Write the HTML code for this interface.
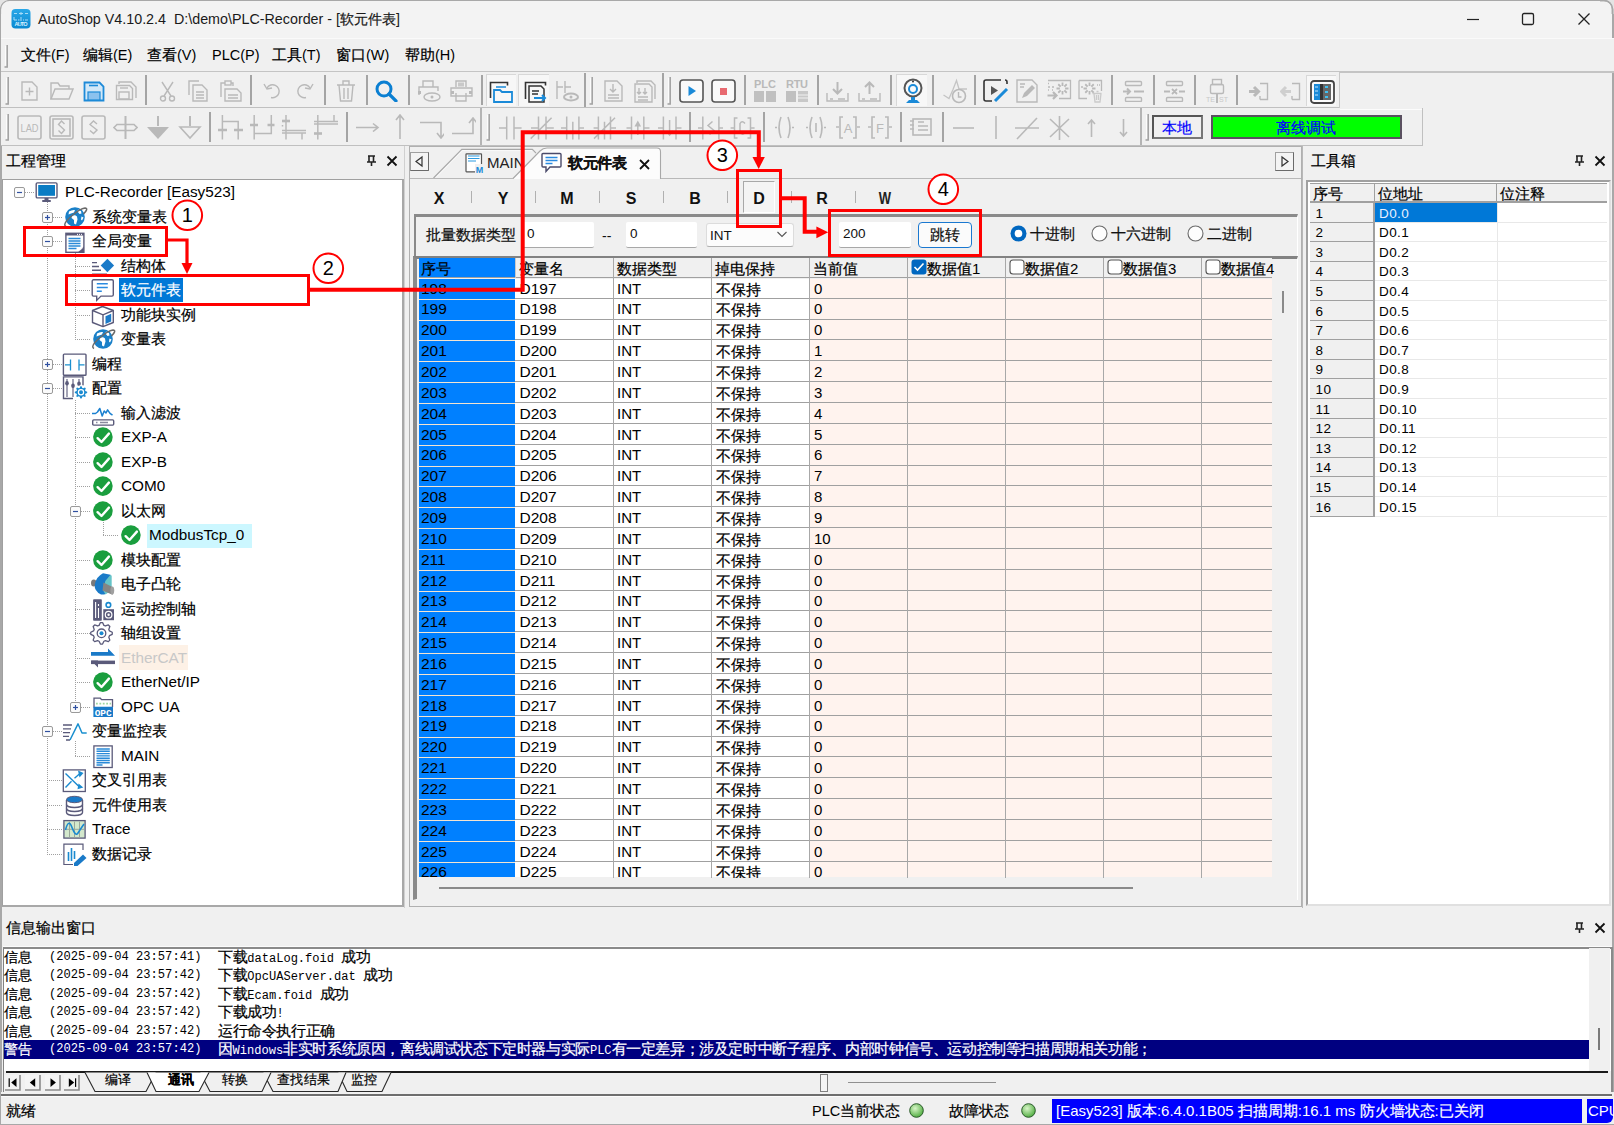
<!DOCTYPE html><html><head><meta charset='utf-8'><style>*{margin:0;padding:0}
body{width:1614px;height:1125px;overflow:hidden;background:#f0f0f0;font-family:"Liberation Sans",sans-serif;position:relative}
div,svg{position:absolute;box-sizing:border-box}
.t{white-space:nowrap;line-height:20px;height:20px;margin-top:-10px}
.c{-webkit-text-stroke:0.22px currentColor}
</style></head><body><div style="left:0px;top:0px;width:1614px;height:1125px;background:#f0f0f0"></div>
<div style="left:0px;top:0px;width:1614px;height:38px;background:#f3f3f3"></div>
<div style="left:0px;top:0px;width:1614px;height:1px;background:#a8a8a8"></div>
<div style="left:0px;top:0px;width:1px;height:1125px;background:#a8a8a8"></div>
<div style="left:1612px;top:8px;width:1.5px;height:1117px;background:#a8a8a8"></div>
<svg style="left:0px;top:0px;" width="14" height="14" viewBox="0 0 14 14"><path d="M0 0H14V0.5H9.5A9 9 0 0 0 0.5 9.5V14H0z" fill="#e4e4e4"/><path d="M14 0.5H9.5A9 9 0 0 0 0.5 9.5V14" stroke="#a8a8a8" stroke-width="1.2" fill="none"/></svg>
<svg style="left:1600px;top:0px;" width="14" height="14" viewBox="0 0 14 14"><path d="M0 0.5H4A8.5 8.5 0 0 1 12.5 9V14" stroke="#a8a8a8" stroke-width="1.5" fill="#f3f3f3"/><path d="M0 0H14V14H13.3V9A9 9 0 0 0 4 0z" fill="#e4e4e4"/><path d="M0 0.5H4A8.5 8.5 0 0 1 12.5 9V14" stroke="#a8a8a8" stroke-width="1.5" fill="none"/></svg>
<svg style="left:11px;top:8.5px;" width="20" height="20" viewBox="0 0 20 20"><defs><linearGradient id="ai" x1="0" y1="0" x2="0" y2="1"><stop offset="0" stop-color="#2aa8e8"/><stop offset="1" stop-color="#0a88d0"/></linearGradient></defs><rect x="0.5" y="0" width="19" height="19.5" rx="4" fill="url(#ai)"/><path d="M3 4.5h3M8 4.5h4M14 4.5h3M10 3v3M3 8v3h3M14 11h3M10 8v4M7 11h1.5M12 11h1" stroke="#a8dcf8" stroke-width="1" fill="none"/><text x="10" y="17.2" font-size="5.5" fill="#d8f0ff" text-anchor="middle" font-family="Liberation Sans" font-weight="bold" textLength="13">AUTO</text></svg>
<div class="t " style="left:38px;top:19px;font-size:14.3px;color:#1a1a1a">AutoShop V4.10.2.4&nbsp;&nbsp;D:\demo\PLC-Recorder - [<span class=c>软元件表</span>]</div>
<svg style="left:1466px;top:12px;" width="14" height="14" viewBox="0 0 14 14"><path d="M1 7.5h12" stroke="#222" stroke-width="1.2"/></svg>
<svg style="left:1521px;top:12px;" width="14" height="14" viewBox="0 0 14 14"><rect x="1.5" y="1.5" width="11" height="11" rx="1.5" stroke="#222" stroke-width="1.3" fill="none"/></svg>
<svg style="left:1577px;top:12px;" width="14" height="14" viewBox="0 0 14 14"><path d="M1.5 1.5L12.5 12.5M12.5 1.5L1.5 12.5" stroke="#222" stroke-width="1.3"/></svg>
<div style="left:1px;top:38px;width:1613px;height:34px;background:#f0f0f0"></div>
<div style="left:1px;top:38px;width:1613px;height:1px;background:#fafafa"></div>
<svg style="left:4px;top:44px;" width="5" height="24" viewBox="0 0 5 24"><path d="M0.5 23H3.2V1" stroke="#a0a0a0" stroke-width="1.5" fill="none"/><path d="M1.5 2V21.5" stroke="#fcfcfc" stroke-width="1"/></svg>
<div class="t " style="left:21px;top:55px;font-size:14.5px;color:#000"><span class=c>文件</span>(F)</div>
<div class="t " style="left:83px;top:55px;font-size:14.5px;color:#000"><span class=c>编辑</span>(E)</div>
<div class="t " style="left:147px;top:55px;font-size:14.5px;color:#000"><span class=c>查看</span>(V)</div>
<div class="t " style="left:212px;top:55px;font-size:14.5px;color:#000">PLC(P)</div>
<div class="t " style="left:272px;top:55px;font-size:14.5px;color:#000"><span class=c>工具</span>(T)</div>
<div class="t " style="left:336px;top:55px;font-size:14.5px;color:#000"><span class=c>窗口</span>(W)</div>
<div class="t " style="left:405px;top:55px;font-size:14.5px;color:#000"><span class=c>帮助</span>(H)</div>
<div style="left:1px;top:71px;width:1613px;height:2px;background:#c4c4c4"></div>
<div style="left:1px;top:72px;width:1339px;height:35px;background:#f0f0f0"></div>
<div style="left:1px;top:107px;width:1339px;height:1px;background:#c0c0c0"></div>
<svg style="left:5px;top:76px;" width="5" height="29" viewBox="0 0 5 29"><path d="M0.5 28H3.2V1" stroke="#a0a0a0" stroke-width="1.5" fill="none"/><path d="M1.5 2V26.5" stroke="#fcfcfc" stroke-width="1"/></svg>
<svg style="left:21px;top:81px;" width="18" height="20" viewBox="0 0 18 20"><path d="M1 1h10l5 5v13H1z" stroke="#b9b9b9" stroke-width="1.4" fill="none"/><path d="M8.5 6.5v8M4.5 10.5h8" stroke="#b9b9b9" stroke-width="1.4" fill="none"/></svg>
<svg style="left:50px;top:81px;" width="24" height="20" viewBox="0 0 24 20"><path d="M1 18V2h7l2 3h9v3" stroke="#b9b9b9" stroke-width="1.4" fill="none"/><path d="M1 18L5 8h18l-4 10z" stroke="#b9b9b9" stroke-width="1.4" fill="none" fill="#e6e6e6"/></svg>
<svg style="left:83px;top:81px;" width="22" height="21" viewBox="0 0 22 21"><path d="M1.5 1.5h15l4 4v14h-19z" stroke="#1d8ad8" stroke-width="1.8" fill="#d2e8f8"/><rect x="5" y="11" width="12" height="8" fill="#8cc2ee" stroke="#1d8ad8" stroke-width="1.2"/><path d="M6 4.5h9" stroke="#1d8ad8" stroke-width="1.6"/></svg>
<svg style="left:115px;top:81px;" width="22" height="20" viewBox="0 0 22 20"><path d="M4 3V1h12l5 5v11" stroke="#b9b9b9" stroke-width="1.4" fill="none"/><path d="M1.5 4.5h13l3 3v11h-16z" stroke="#b9b9b9" stroke-width="1.4" fill="none"/><rect x="4" y="11" width="10" height="7" stroke="#b9b9b9" stroke-width="1.4" fill="none"/><path d="M5 7h8" stroke="#b9b9b9" stroke-width="1.4" fill="none"/></svg>
<div style="left:145px;top:75px;width:1.5px;height:30px;background:#a4a4a4"></div>
<svg style="left:159px;top:81px;" width="17" height="21" viewBox="0 0 17 21"><path d="M3 1l9 14M14 1L5 15" stroke="#b9b9b9" stroke-width="1.4" fill="none"/><circle cx="4" cy="17.5" r="2.5" stroke="#b9b9b9" stroke-width="1.4" fill="none"/><circle cx="13" cy="17.5" r="2.5" stroke="#b9b9b9" stroke-width="1.4" fill="none"/></svg>
<svg style="left:188px;top:80px;" width="22" height="22" viewBox="0 0 22 22"><path d="M1 15V1h10" stroke="#b9b9b9" stroke-width="1.4" fill="none"/><path d="M5 5h9l5 5v11H5z" stroke="#b9b9b9" stroke-width="1.4" fill="none"/><path d="M8 12h8M8 15h8M8 18h8" stroke="#b9b9b9" stroke-width="1.4" fill="none"/></svg>
<svg style="left:220px;top:80px;" width="22" height="22" viewBox="0 0 22 22"><path d="M1 17V3h4M11 3h2v3" stroke="#b9b9b9" stroke-width="1.4" fill="none"/><rect x="5" y="1" width="6" height="4" stroke="#b9b9b9" stroke-width="1.4" fill="none"/><path d="M5 9h12l4 4v8H5z" stroke="#b9b9b9" stroke-width="1.4" fill="none"/><path d="M8 15h10M8 18h10" stroke="#b9b9b9" stroke-width="1.4" fill="none"/></svg>
<div style="left:250px;top:75px;width:1.5px;height:30px;background:#a4a4a4"></div>
<svg style="left:263px;top:82px;" width="19" height="17" viewBox="0 0 19 17"><path d="M4 6A6.5 6.5 0 1 1 8 15.5" stroke="#b9b9b9" stroke-width="1.4" fill="none"/><path d="M1 2l3 5 5-1" stroke="#b9b9b9" stroke-width="1.4" fill="none"/></svg>
<svg style="left:295px;top:82px;" width="19" height="17" viewBox="0 0 19 17"><path d="M15 6A6.5 6.5 0 1 0 11 15.5" stroke="#b9b9b9" stroke-width="1.4" fill="none"/><path d="M18 2l-3 5-5-1" stroke="#b9b9b9" stroke-width="1.4" fill="none"/></svg>
<div style="left:324px;top:75px;width:1.5px;height:30px;background:#a4a4a4"></div>
<svg style="left:336px;top:80px;" width="20" height="22" viewBox="0 0 20 22"><path d="M1 5h18M7 5V1h6v4M3 5l1.5 16h11L17 5M8 8v11M12 8v11" stroke="#b9b9b9" stroke-width="1.4" fill="none"/></svg>
<div style="left:366px;top:75px;width:1.5px;height:30px;background:#a4a4a4"></div>
<svg style="left:375px;top:80px;" width="23" height="22" viewBox="0 0 23 22"><circle cx="9" cy="9" r="7" stroke="#0a7fd2" stroke-width="3" fill="none"/><path d="M14 14l7 7" stroke="#0a7fd2" stroke-width="3.2" stroke-linecap="round"/></svg>
<div style="left:408px;top:75px;width:1.5px;height:30px;background:#a4a4a4"></div>
<svg style="left:417px;top:80px;" width="25" height="22" viewBox="0 0 25 22"><path d="M6 7V1h10v6M2 15V7h19v4" stroke="#b9b9b9" stroke-width="1.4" fill="none"/><rect x="1" y="11" width="3" height="3" fill="#b9b9b9"/><ellipse cx="15" cy="17" rx="8" ry="4" stroke="#b9b9b9" stroke-width="1.4" fill="none"/><circle cx="15" cy="17" r="1.5" fill="#b9b9b9"/></svg>
<svg style="left:450px;top:80px;" width="23" height="22" viewBox="0 0 23 22"><path d="M6 7V1h10v6" stroke="#b9b9b9" stroke-width="1.4" fill="none"/><rect x="8" y="2.5" width="6" height="4" fill="#c8c8c8"/><path d="M1 8h21v8H1z" stroke="#b9b9b9" stroke-width="1.4" fill="none"/><path d="M6 13v8h10v-8" stroke="#b9b9b9" stroke-width="1.4" fill="none"/><rect x="1" y="11" width="3" height="3" fill="#b9b9b9"/><rect x="19" y="11" width="3" height="3" fill="#b9b9b9"/></svg>
<div style="left:481px;top:75px;width:1.5px;height:30px;background:#a4a4a4"></div>
<div style="left:486px;top:74px;width:30px;height:32px;background:#f7f7f7;border-left:1px solid #d8d8d8;border-top:1px solid #d8d8d8"></div>
<svg style="left:489px;top:81px;" width="27" height="22" viewBox="0 0 27 22"><path d="M1.5 17V1.5h17v3" stroke="#333" stroke-width="1.6" fill="none"/><path d="M5 9h6l2 2h10v10H5z" stroke="#1a8ad8" stroke-width="1.8" fill="none"/><path d="M7 6h10" stroke="#1a8ad8" stroke-width="1.5"/></svg>
<div style="left:518px;top:74px;width:31px;height:32px;background:#f7f7f7;border-left:1px solid #d8d8d8;border-top:1px solid #d8d8d8"></div>
<svg style="left:524px;top:81px;" width="24" height="22" viewBox="0 0 24 22"><path d="M1.5 18V1.5h20v3" stroke="#333" stroke-width="1.6" fill="none"/><path d="M5 5h12l3 3v13H5z" stroke="#333" stroke-width="1.5" fill="#f7f7f7"/><path d="M8 10h7M8 13h6" stroke="#333" stroke-width="1.3"/><path d="M10 17h11M18 14l3 3-3 3" stroke="#1a8ad8" stroke-width="2" fill="none"/></svg>
<svg style="left:555px;top:80px;" width="24" height="22" viewBox="0 0 24 22"><path d="M2 1v18M2 7h6M10 1v12M10 7h6" stroke="#b9b9b9" stroke-width="1.4" fill="none"/><ellipse cx="16" cy="17" rx="7" ry="3.5" stroke="#b9b9b9" stroke-width="2" fill="none"/><circle cx="16" cy="17" r="1.5" fill="#b9b9b9"/></svg>
<div style="left:584px;top:73px;width:1.5px;height:34px;background:#a4a4a4"></div>
<svg style="left:589px;top:76px;" width="5" height="29" viewBox="0 0 5 29"><path d="M0.5 28H3.2V1" stroke="#a0a0a0" stroke-width="1.5" fill="none"/><path d="M1.5 2V26.5" stroke="#fcfcfc" stroke-width="1"/></svg>
<svg style="left:604px;top:80px;" width="20" height="22" viewBox="0 0 20 22"><path d="M1 1h12l5 5v15H1z" stroke="#b9b9b9" stroke-width="1.4" fill="none"/><path d="M9 4v8M6 9l3 3 3-3M4 15h11M4 18h11" stroke="#b9b9b9" stroke-width="1.4" fill="none"/></svg>
<svg style="left:634px;top:80px;" width="23" height="23" viewBox="0 0 23 23"><path d="M3 3V1h14l4 4v14" stroke="#b9b9b9" stroke-width="1.4" fill="none"/><path d="M1 4h14l3 3v15H1z" stroke="#b9b9b9" stroke-width="1.4" fill="none"/><path d="M5 8v6M3 12l2 2 2-2M11 8v6M9 12l2 2 2-2M4 17h10M4 20h10" stroke="#b9b9b9" stroke-width="1.4" fill="none"/></svg>
<div style="left:662px;top:73px;width:1.5px;height:34px;background:#a4a4a4"></div>
<svg style="left:667px;top:76px;" width="5" height="29" viewBox="0 0 5 29"><path d="M0.5 28H3.2V1" stroke="#a0a0a0" stroke-width="1.5" fill="none"/><path d="M1.5 2V26.5" stroke="#fcfcfc" stroke-width="1"/></svg>
<svg style="left:679px;top:79px;" width="25" height="24" viewBox="0 0 25 24"><rect x="1" y="1" width="23" height="22" rx="3" stroke="#555" stroke-width="1.6" fill="#fafafa"/><path d="M9.5 7v10l7.5-5z" fill="#1a8ad8"/></svg>
<svg style="left:711px;top:79px;" width="25" height="24" viewBox="0 0 25 24"><rect x="1" y="1" width="23" height="22" rx="3" stroke="#555" stroke-width="1.6" fill="#fafafa"/><rect x="9" y="9" width="7" height="7" fill="#e86a70"/></svg>
<div style="left:744px;top:75px;width:1.5px;height:30px;background:#a4a4a4"></div>
<svg style="left:753px;top:78px;" width="24" height="25" viewBox="0 0 24 25"><text x="12" y="10" font-size="11" font-family="Liberation Sans" fill="#b9b9b9" text-anchor="middle" font-weight="bold" textLength="22">PLC</text><rect x="1" y="13" width="10" height="11" fill="#c0c0c0"/><rect x="13" y="13" width="10" height="11" fill="#c0c0c0"/></svg>
<svg style="left:785px;top:78px;" width="24" height="25" viewBox="0 0 24 25"><text x="12" y="10" font-size="11" font-family="Liberation Sans" fill="#b9b9b9" text-anchor="middle" font-weight="bold" textLength="22">RTU</text><rect x="1" y="13" width="10" height="11" fill="#c0c0c0"/><rect x="13" y="13" width="10" height="11" fill="#c8c8c8"/><path d="M13 17h10M13 20h10" stroke="#f0f0f0" stroke-width="1"/></svg>
<div style="left:817px;top:75px;width:1.5px;height:30px;background:#a4a4a4"></div>
<svg style="left:826px;top:81px;" width="23" height="22" viewBox="0 0 23 22"><path d="M1 12v8h21v-8" stroke="#b9b9b9" stroke-width="1.4" fill="none"/><path d="M11.5 1v11M7 8l4.5 4.5L16 8" stroke="#b9b9b9" stroke-width="2" fill="none"/><path d="M4 18h3M12 18h7" stroke="#b9b9b9" stroke-width="1.4" fill="none"/></svg>
<svg style="left:858px;top:81px;" width="23" height="22" viewBox="0 0 23 22"><path d="M1 12v8h21v-8" stroke="#b9b9b9" stroke-width="1.4" fill="none"/><path d="M11.5 13V2M7 6l4.5-4.5L16 6" stroke="#b9b9b9" stroke-width="2" fill="none"/><path d="M4 18h3M12 18h7" stroke="#b9b9b9" stroke-width="1.4" fill="none"/></svg>
<div style="left:890px;top:75px;width:1.5px;height:30px;background:#a4a4a4"></div>
<div style="left:896px;top:74px;width:31px;height:32px;background:#f7f7f7;border-left:1px solid #d8d8d8;border-top:1px solid #d8d8d8"></div>
<svg style="left:902px;top:78px;" width="22" height="26" viewBox="0 0 22 26"><circle cx="11" cy="10" r="8.5" stroke="#555" stroke-width="2" fill="#fafafa"/><circle cx="11" cy="11" r="4" stroke="#1a8ad8" stroke-width="2" fill="none"/><circle cx="11" cy="3.5" r="1" fill="#333"/><path d="M9 19v3h4v-3M4 25h14l-3-3H7z" fill="#1a8ad8"/></svg>
<div style="left:932px;top:75px;width:1.5px;height:30px;background:#a4a4a4"></div>
<svg style="left:942px;top:78px;" width="26" height="26" viewBox="0 0 26 26"><path d="M1.5 17L7 20.5 11 11.5 14.5 2.5 17 11H25" stroke="#c4c4c4" stroke-width="1.3" fill="none"/><circle cx="17" cy="18" r="6.5" stroke="#b9b9b9" stroke-width="1.6" fill="#f0f0f0"/><path d="M16.5 14v5h3" stroke="#b9b9b9" stroke-width="1.4" fill="none"/></svg>
<div style="left:974px;top:75px;width:1.5px;height:30px;background:#a4a4a4"></div>
<svg style="left:983px;top:78px;" width="26" height="25" viewBox="0 0 26 25"><path d="M18 2h-15a2 2 0 0 0-2 2v17a2 2 0 0 0 2 2h6" stroke="#333" stroke-width="1.6" fill="none"/><path d="M24 6V4a2 2 0 0 0-2-2" stroke="#333" stroke-width="1.6" fill="none"/><path d="M8 8v9l7-4.5z" fill="#555"/><path d="M12 23l12-12" stroke="#1a8ad8" stroke-width="3"/></svg>
<svg style="left:1016px;top:79px;" width="22" height="24" viewBox="0 0 22 24"><path d="M1 1h15l5 5v17H1z" stroke="#b9b9b9" stroke-width="1.4" fill="none"/><path d="M4 5h5M4 8h4" stroke="#b9b9b9" stroke-width="1.4" fill="none"/><path d="M6 19l2-5 8-8 3 3-8 8z" fill="#b9b9b9"/></svg>
<svg style="left:1047px;top:79px;" width="25" height="22" viewBox="0 0 25 22"><path d="M1 1.5H23.5V19.5H12M1 4.5h1M1 8h2M5 8h2M1 11h1M5 11h1" stroke="#b9b9b9" stroke-width="1.3" fill="none"/><path d="M18.10 9.50L21.50 9.50M17.34 11.34L19.74 13.74M15.50 12.10L15.50 15.50M13.66 11.34L11.26 13.74M12.90 9.50L9.50 9.50M13.66 7.66L11.26 5.26M15.50 6.90L15.50 3.50M17.34 7.66L19.74 5.26" stroke="#b9b9b9" stroke-width="1.8"/><path d="M0.5 16.5H9M6 13l3.5 3.5L6 20" stroke="#b9b9b9" stroke-width="2.2" fill="none"/></svg>
<svg style="left:1078px;top:79px;" width="25" height="24" viewBox="0 0 25 24"><path d="M1 1.5H23.5V12M1 1.5V19.5H9M3 8h2M19 6h1M21 6h1" stroke="#b9b9b9" stroke-width="1.3" fill="none"/><path d="M14.10 9.50L17.50 9.50M13.34 11.34L15.74 13.74M11.50 12.10L11.50 15.50M9.66 11.34L7.26 13.74M8.90 9.50L5.50 9.50M9.66 7.66L7.26 5.26M11.50 6.90L11.50 3.50M13.34 7.66L15.74 5.26" stroke="#b9b9b9" stroke-width="1.8"/><path d="M14.5 14.5h9M16 14.5l1 8.5h5l1-8.5M18.5 12.5h2M18.5 16v5M20.5 16v5" stroke="#cacaca" stroke-width="1.3" fill="none"/></svg>
<div style="left:1111px;top:75px;width:1.5px;height:30px;background:#a4a4a4"></div>
<svg style="left:1122px;top:80px;" width="23" height="22" viewBox="0 0 23 22"><rect x="3.5" y="1.5" width="16" height="4" rx="1" stroke="#b9b9b9" stroke-width="1.4" fill="none"/><rect x="3.5" y="17.5" width="16" height="4" rx="1" stroke="#b9b9b9" stroke-width="1.4" fill="none"/><path d="M1 11.5h7M12 11.5h10M5 8.5l3 3-3 3" stroke="#b9b9b9" stroke-width="2" fill="none"/></svg>
<div style="left:1153px;top:75px;width:1.5px;height:30px;background:#a4a4a4"></div>
<svg style="left:1163px;top:80px;" width="23" height="22" viewBox="0 0 23 22"><rect x="3.5" y="1.5" width="16" height="4" rx="1" stroke="#b9b9b9" stroke-width="1.4" fill="none"/><rect x="3.5" y="17.5" width="16" height="4" rx="1" stroke="#b9b9b9" stroke-width="1.4" fill="none"/><path d="M1 11.5h6M16 11.5h6M9 9l5 5M14 9l-5 5" stroke="#b9b9b9" stroke-width="1.8" fill="none"/></svg>
<div style="left:1194px;top:75px;width:1.5px;height:30px;background:#a4a4a4"></div>
<svg style="left:1205px;top:78px;" width="24" height="25" viewBox="0 0 24 25"><rect x="7.5" y="1.5" width="9" height="5" stroke="#b9b9b9" stroke-width="1.4" fill="none"/><rect x="5.5" y="6.5" width="13" height="9" rx="1.5" stroke="#b9b9b9" stroke-width="1.4" fill="none"/><path d="M12 15v10" stroke="#b9b9b9" stroke-width="2"/><text x="1" y="24" font-size="7" font-family="Liberation Sans" fill="#c8c8c8">TE</text><text x="14" y="24" font-size="7" font-family="Liberation Sans" fill="#c8c8c8">ST</text></svg>
<div style="left:1236px;top:75px;width:1.5px;height:30px;background:#a4a4a4"></div>
<svg style="left:1248px;top:82px;" width="21" height="19" viewBox="0 0 21 19"><path d="M1 9.5h8M6 5l4.5 4.5L6 14" stroke="#b9b9b9" stroke-width="3" fill="none"/><path d="M12 1.5h7.5v16H12M12 14v3.5" stroke="#b9b9b9" stroke-width="1.4" fill="none"/></svg>
<svg style="left:1280px;top:82px;" width="21" height="19" viewBox="0 0 21 19"><path d="M11 9.5H3M6 5L1.5 9.5 6 14" stroke="#cfcfcf" stroke-width="3" fill="none"/><path d="M12 1.5h7.5v16H12M12 14v3.5" stroke="#b9b9b9" stroke-width="1.4" fill="none"/></svg>
<div style="left:1306px;top:75px;width:30px;height:31px;background:#f7f7f7;border-left:1px solid #d8d8d8;border-top:1px solid #d8d8d8"></div>
<svg style="left:1310px;top:80px;" width="25" height="24" viewBox="0 0 25 24"><rect x="1" y="1" width="23" height="22" rx="3" stroke="#444" stroke-width="1.8" fill="#fafafa"/><rect x="4" y="4" width="6" height="16" fill="#1a8ad8"/><rect x="10" y="4" width="3" height="16" fill="#333"/><rect x="13" y="4" width="8" height="16" fill="#666"/><path d="M15 7h3M15 12h3M15 17h3" stroke="#40c0f0" stroke-width="2"/><path d="M5 7h3M5 11h3M5 15h3" stroke="#bfe4ff" stroke-width="1"/></svg>
<div style="left:1339px;top:72px;width:1px;height:36px;background:#c8c8c8"></div>
<div style="left:1px;top:108px;width:1422px;height:37px;background:#f0f0f0"></div>
<div style="left:1340px;top:108.5px;width:82px;height:1px;background:#fcfcfc"></div>
<div style="left:1px;top:145px;width:1422px;height:1px;background:#c0c0c0"></div>
<svg style="left:5px;top:113px;" width="5" height="28" viewBox="0 0 5 28"><path d="M0.5 27H3.2V1" stroke="#a0a0a0" stroke-width="1.5" fill="none"/><path d="M1.5 2V25.5" stroke="#fcfcfc" stroke-width="1"/></svg>
<svg style="left:17px;top:115px;" width="25" height="25" viewBox="0 0 25 25"><rect x="1" y="1" width="23" height="23" rx="2" stroke="#b9b9b9" stroke-width="1.6" fill="none"/><text x="12.5" y="16.5" font-size="10.5" font-family="Liberation Sans" fill="#b9b9b9" text-anchor="middle" textLength="18" lengthAdjust="spacingAndGlyphs">LAD</text></svg>
<svg style="left:49px;top:115px;" width="25" height="25" viewBox="0 0 25 25"><rect x="1" y="1" width="23" height="23" rx="2" stroke="#b9b9b9" stroke-width="1.6" fill="none"/><rect x="4" y="4" width="17" height="17" stroke="#b9b9b9" stroke-width="1.6" fill="none"/><path d="M15.5 9L12.5 6 9.5 9.5 15.5 15 12.5 18.5 9.5 15.5" stroke="#b9b9b9" stroke-width="1.4" fill="none"/></svg>
<svg style="left:81px;top:115px;" width="25" height="25" viewBox="0 0 25 25"><rect x="1" y="1" width="23" height="23" rx="2" stroke="#b9b9b9" stroke-width="1.6" fill="none"/><path d="M16 9L12.5 6 9 9.5 16 15 12.5 18.5 9 15.5" stroke="#b9b9b9" stroke-width="1.4" fill="none"/></svg>
<svg style="left:113px;top:115px;" width="25" height="25" viewBox="0 0 25 25"><path d="M12.5 1v23" stroke="#b9b9b9" stroke-width="2"/><path d="M1 12.5l3-3h17l3 3-3 3H4z" stroke="#b9b9b9" stroke-width="1.6" fill="none"/></svg>
<svg style="left:146px;top:115px;" width="24" height="25" viewBox="0 0 24 25"><path d="M12 1v10" stroke="#b9b9b9" stroke-width="2"/><path d="M1 12h22l-11 12z" fill="#b9b9b9"/></svg>
<svg style="left:178px;top:115px;" width="24" height="25" viewBox="0 0 24 25"><path d="M12 1v10" stroke="#b9b9b9" stroke-width="2"/><path d="M2 12h20l-10 11z" stroke="#b9b9b9" stroke-width="1.6" fill="none"/></svg>
<div style="left:209px;top:112px;width:1.5px;height:30px;background:#a4a4a4"></div>
<svg style="left:210px;top:110px;" width="136" height="35" viewBox="0 0 136 35"><path d="M12.4 5v24.5M12.4 11.5H28.2V29.5" stroke="#b9b9b9" stroke-width="1.5" fill="none"/><path d="M8 20h9M24 20h9" stroke="#b9b9b9" stroke-width="2.6" fill="none"/><path d="M44.2 5v24.5M61.3 5V23.5H44.2" stroke="#b9b9b9" stroke-width="1.5" fill="none"/><path d="M40 15h8M57.5 15h7" stroke="#b9b9b9" stroke-width="2.6" fill="none"/><path d="M76 5v24.5M72 20.5H96M72 23H96M92 23v6.5" stroke="#b9b9b9" stroke-width="1.5" fill="none"/><path d="M72 11h8" stroke="#b9b9b9" stroke-width="2.6" fill="none"/><path d="M72.5 15v1.5" stroke="#b9b9b9" stroke-width="1.5" fill="none"/><path d="M107.8 5v24.5M124 5v6.5M104 11.5H128M104 14H128" stroke="#b9b9b9" stroke-width="1.5" fill="none"/><path d="M104 23.5h8" stroke="#b9b9b9" stroke-width="2.6" fill="none"/></svg>
<div style="left:346px;top:112px;width:1.5px;height:30px;background:#a4a4a4"></div>
<svg style="left:355px;top:122px;" width="25" height="10" viewBox="0 0 25 10"><path d="M1 5.5h22M18 1.5l5 4-5 4" stroke="#b9b9b9" stroke-width="1.6" fill="none"/></svg>
<svg style="left:395px;top:114px;" width="10" height="26" viewBox="0 0 10 26"><path d="M5 25V2M1 6l4-5 4 5" stroke="#b9b9b9" stroke-width="1.6" fill="none"/></svg>
<svg style="left:419px;top:120.5px;" width="25" height="18" viewBox="0 0 25 18"><path d="M1 1.5h21V16M18 12l4 5 4-5" stroke="#b9b9b9" stroke-width="1.6" fill="none"/></svg>
<svg style="left:451px;top:117.3px;" width="25" height="18" viewBox="0 0 25 18"><path d="M1 16.5h21V2M18 6l4-5 4 5" stroke="#b9b9b9" stroke-width="1.6" fill="none"/></svg>
<div style="left:480px;top:108px;width:1.5px;height:37px;background:#b4b4b4"></div>
<svg style="left:486px;top:113px;" width="5" height="28" viewBox="0 0 5 28"><path d="M0.5 27H3.2V1" stroke="#a0a0a0" stroke-width="1.5" fill="none"/><path d="M1.5 2V25.5" stroke="#fcfcfc" stroke-width="1"/></svg>
<svg style="left:480px;top:110px;" width="280" height="35" viewBox="0 0 280 35"><path d="M19 18H26.7M26.7 6.5V29.5M34 6.5V29.5M34 18H41.6" stroke="#b9b9b9" stroke-width="1.5" fill="none"/><path d="M51 18H58.5M58.5 6.5V29.5M66 6.5V29.5M66 18H73.8M50.7 28.6L71.6 7.8" stroke="#b9b9b9" stroke-width="1.5" fill="none"/><path d="M81 18H86.7M86.7 6.5V29.5M98.9 6.5V29.5M92.8 11.7V29.5M98.9 18H104" stroke="#b9b9b9" stroke-width="1.5" fill="none"/><path d="M113.6 18H118.4M118.4 6.5V29.5M130.5 6.5V29.5M124.5 11.7V29.5M130.5 18H136M114 28.6L135 7.8" stroke="#b9b9b9" stroke-width="1.5" fill="none"/><path d="M146.5 18H151.5M151.5 6.5V29.5M163.8 6.5V29.5M163.8 18H169.5M157.8 25V13" stroke="#b9b9b9" stroke-width="1.5" fill="none"/><path d="M154.5 16.5L157.8 10.5 161.1 16.5Z" fill="#b9b9b9"/><path d="M178 18H183.4M183.4 6.5V29.5M196 6.5V29.5M196 18H201.5M189.6 10V24M186.5 21L189.6 25 192.7 21" stroke="#b9b9b9" stroke-width="1.5" fill="none"/><path d="M218 18H222.8M222.8 6.5V29.5M238.9 6.5V29.5M238.9 18H243M232.5 11.5L228 15.5 234 20.5 229.5 24.5" stroke="#b9b9b9" stroke-width="1.5" fill="none"/><path d="M250.6 18H254M257.5 8H254.5V28H257.5M267.5 8H270.5V28H267.5M270.5 18H274.6M265 13.5Q262 10 260 13.5V22Q262 26 265 22.5" stroke="#b9b9b9" stroke-width="1.5" fill="none"/></svg>
<div style="left:689px;top:112px;width:1.5px;height:30px;background:#a4a4a4"></div>
<div style="left:763px;top:112px;width:1.5px;height:30px;background:#a4a4a4"></div>
<svg style="left:774px;top:116px;" width="21" height="23" viewBox="0 0 21 23"><path d="M1 11.5h2M18 11.5h2M7 1Q3 11.5 7 22M14 1Q18 11.5 14 22" stroke="#b9b9b9" stroke-width="1.6" fill="none"/></svg>
<svg style="left:805px;top:116px;" width="22" height="23" viewBox="0 0 22 23"><path d="M1 11.5h2M19 11.5h2M7 1Q3 11.5 7 22M15 1Q19 11.5 15 22M11 7v9" stroke="#b9b9b9" stroke-width="1.6" fill="none"/></svg>
<svg style="left:835px;top:115px;" width="26" height="25" viewBox="0 0 26 25"><path d="M1 12h3M22 12h3M8 2H5v21h3M18 2h3v21h-3" stroke="#b9b9b9" stroke-width="1.6" fill="none"/><text x="13" y="18" font-size="13" font-family="Liberation Sans" fill="#b9b9b9" text-anchor="middle">A</text></svg>
<svg style="left:867px;top:115px;" width="26" height="25" viewBox="0 0 26 25"><path d="M1 12h3M22 12h3M8 2H5v21h3M18 2h3v21h-3" stroke="#b9b9b9" stroke-width="1.6" fill="none"/><text x="13" y="18" font-size="13" font-family="Liberation Sans" fill="#b9b9b9" text-anchor="middle">F</text></svg>
<div style="left:900px;top:112px;width:1.5px;height:30px;background:#a4a4a4"></div>
<svg style="left:909px;top:117px;" width="23" height="20" viewBox="0 0 23 20"><rect x="4" y="2" width="18" height="16" stroke="#b9b9b9" stroke-width="1.6" fill="none"/><path d="M1 4h4M1 8h4M1 12h4M9 5h6M9 9h10M9 13h10" stroke="#b9b9b9" stroke-width="1.6" fill="none"/></svg>
<div style="left:942px;top:112px;width:1.5px;height:30px;background:#a4a4a4"></div>
<svg style="left:952px;top:126px;" width="23" height="4" viewBox="0 0 23 4"><path d="M1 2h21" stroke="#b9b9b9" stroke-width="1.6" fill="none"/></svg>
<svg style="left:994px;top:115px;" width="4" height="25" viewBox="0 0 4 25"><path d="M2 1v23" stroke="#b9b9b9" stroke-width="1.6" fill="none"/></svg>
<svg style="left:1014px;top:116px;" width="26" height="24" viewBox="0 0 26 24"><path d="M1 12h24M3 23L23 2" stroke="#b9b9b9" stroke-width="1.6" fill="none"/></svg>
<svg style="left:1048px;top:115px;" width="23" height="25" viewBox="0 0 23 25"><path d="M11.5 1v24M2 4l19 18M21 4L2 22" stroke="#b9b9b9" stroke-width="1.6" fill="none"/></svg>
<svg style="left:1087px;top:118px;" width="9" height="20" viewBox="0 0 9 20"><path d="M4.5 19V2M1 6l3.5-4 3.5 4" stroke="#b9b9b9" stroke-width="1.6" fill="none"/></svg>
<svg style="left:1119px;top:118px;" width="9" height="20" viewBox="0 0 9 20"><path d="M4.5 1v17M1 14l3.5 4 3.5-4" stroke="#b9b9b9" stroke-width="1.6" fill="none"/></svg>
<div style="left:1140px;top:108px;width:1.5px;height:37px;background:#b4b4b4"></div>
<svg style="left:1145px;top:113px;" width="5" height="28" viewBox="0 0 5 28"><path d="M0.5 27H3.2V1" stroke="#a0a0a0" stroke-width="1.5" fill="none"/><path d="M1.5 2V25.5" stroke="#fcfcfc" stroke-width="1"/></svg>
<div style="left:1152px;top:115px;width:51px;height:24px;border:2px solid #555;border-right-color:#777;border-bottom-color:#777;background:#f0f0f0"></div>
<div class="t " style="left:1177px;top:128px;font-size:15px;color:#0000ff;transform:translateX(-50%)"><span class=c>本地</span></div>
<div style="left:1211px;top:115px;width:191px;height:24px;border:2px solid #5a5060;background:#00ff00"></div>
<div class="t " style="left:1306px;top:128px;font-size:15px;color:#0000ff;transform:translateX(-50%)"><span class=c>离线调试</span></div>
<div style="left:1422px;top:108px;width:1px;height:38px;background:#c0c0c0"></div>
<div class="t " style="left:6px;top:161px;font-size:15px;color:#000"><span class=c>工程管理</span></div>
<svg style="left:366px;top:155px;" width="11" height="12" viewBox="0 0 11 12"><path d="M2 1h7M3 1v6M7.5 1v6M1 7h9M5.5 7v4" stroke="#222" stroke-width="1.6" fill="none"/></svg>
<svg style="left:386px;top:155px;" width="12" height="12" viewBox="0 0 12 12"><path d="M1.5 1.5l9 9M10.5 1.5l-9 9" stroke="#111" stroke-width="1.8"/></svg>
<div style="left:2px;top:179px;width:402px;height:728px;background:#fff;border:1px solid #a0a0a0;border-right:2px solid #a8a8a8;border-bottom:2px solid #a8a8a8"></div>
<div style="left:1px;top:146px;width:1px;height:949px;background:#a8a8a8"></div>
<div style="left:404px;top:146px;width:1px;height:762px;background:#d0d0d0"></div>
<div style="left:47px;top:200px;width:1px;height:654px;background-image:linear-gradient(180deg,#a0a0a0 50%,transparent 50%);background-size:1px 2px"></div>
<div style="left:75px;top:251px;width:1px;height:89px;background-image:linear-gradient(180deg,#a0a0a0 50%,transparent 50%);background-size:1px 2px"></div>
<div style="left:75px;top:400px;width:1px;height:307px;background-image:linear-gradient(180deg,#a0a0a0 50%,transparent 50%);background-size:1px 2px"></div>
<div style="left:75px;top:741px;width:1px;height:15px;background-image:linear-gradient(180deg,#a0a0a0 50%,transparent 50%);background-size:1px 2px"></div>
<div style="left:103px;top:520px;width:1px;height:16px;background-image:linear-gradient(180deg,#a0a0a0 50%,transparent 50%);background-size:1px 2px"></div>
<div style="left:25px;top:192px;width:10px;height:1px;background-image:linear-gradient(90deg,#a0a0a0 50%,transparent 50%);background-size:2px 1px"></div>
<svg style="left:13.5px;top:186.5px;" width="11" height="11" viewBox="0 0 11 11"><rect x="0.5" y="0.5" width="10" height="10" rx="1.5" fill="#fbfbfb" stroke="#9a9a9a"/><path d="M3 5.5h5" stroke="#3050a0" stroke-width="1.2"/></svg>
<svg style="left:34px;top:180px;" width="26" height="26" viewBox="0 0 26 26"><rect x="2.2" y="2.9" width="20.8" height="15" rx="1.2" fill="#fff" stroke="#5a5a7a" stroke-width="1.4"/><rect x="4.2" y="5" width="16.8" height="10.8" fill="#0a7cc4"/><rect x="10.5" y="17.9" width="4" height="2.2" fill="#5a5a7a"/><rect x="8" y="20" width="9" height="2" rx="1" fill="#5a5a7a"/></svg>
<div class="t " style="left:65px;top:192.1px;font-size:15.3px;color:#000">PLC-Recorder [Easy523]</div>
<div style="left:47px;top:217px;width:16px;height:1px;background-image:linear-gradient(90deg,#a0a0a0 50%,transparent 50%);background-size:2px 1px"></div>
<svg style="left:41.5px;top:211.5px;" width="11" height="11" viewBox="0 0 11 11"><rect x="0.5" y="0.5" width="10" height="10" rx="1.5" fill="#fbfbfb" stroke="#9a9a9a"/><path d="M3 5.5h5" stroke="#3050a0" stroke-width="1.2"/><path d="M5.5 3v5" stroke="#3050a0" stroke-width="1.2"/></svg>
<svg style="left:62px;top:205px;" width="26" height="26" viewBox="0 0 26 26"><circle cx="13" cy="12" r="9.8" fill="#1a80c8"/><path d="M7 6.5q3-2 6-1.5l-1 2.5-3 1-2.5 1zM10 11q3-1.5 5 .5l.5 3-1.5 5-2-1v-3.5l-2.5-2zM16 4.5l3 1.5.5 2.5-2 .5-2-2.5zM19.5 11.5l2 1-1.5 3-1-1z" fill="#fff"/><path d="M4 21.5q-4-2 5-10t14-8.5q4 .5-1.5 6" stroke="#6a6a6a" stroke-width="1.5" fill="none"/></svg>
<div class="t " style="left:92px;top:216.6px;font-size:15.3px;color:#000"><span class=c>系统变量表</span></div>
<div style="left:47px;top:241px;width:16px;height:1px;background-image:linear-gradient(90deg,#a0a0a0 50%,transparent 50%);background-size:2px 1px"></div>
<svg style="left:41.5px;top:235.5px;" width="11" height="11" viewBox="0 0 11 11"><rect x="0.5" y="0.5" width="10" height="10" rx="1.5" fill="#fbfbfb" stroke="#9a9a9a"/><path d="M3 5.5h5" stroke="#3050a0" stroke-width="1.2"/></svg>
<svg style="left:62px;top:229px;" width="26" height="26" viewBox="0 0 26 26"><rect x="3.9" y="4.3" width="18" height="19" fill="#fff" stroke="#5a5a7a" stroke-width="1.4"/><rect x="3.9" y="4.3" width="18" height="2.2" fill="#5a5a7a"/><path d="M15 5.4h1M17 5.4h1M19 5.4h1" stroke="#fff" stroke-width="1"/><path d="M6.5 9.5h12M6.5 12h12M6.5 14.5h12M6.5 17h12M6.5 19.5h8" stroke="#2a8ad8" stroke-width="1.3"/><path d="M16 23.3l5.9-5.9v5.9z" fill="#5a5a7a"/><path d="M17.8 21.5l2.5-2.5" stroke="#fff" stroke-width="0.9"/></svg>
<div class="t " style="left:92px;top:241.1px;font-size:15.3px;color:#000"><span class=c>全局变量</span></div>
<div style="left:75px;top:266px;width:16px;height:1px;background-image:linear-gradient(90deg,#a0a0a0 50%,transparent 50%);background-size:2px 1px"></div>
<svg style="left:90px;top:254px;" width="26" height="26" viewBox="0 0 26 26"><path d="M2 8.6h5M2 12.5h7M2 16.3h9" stroke="#5a5a7a" stroke-width="1.4"/><path d="M2 19.8h15" stroke="#8a8aa0" stroke-width="1"/><path d="M17.4 4.8l6.7 6.7-6.7 6.7-6.7-6.7z" fill="#1a7ac8"/></svg>
<div class="t " style="left:121px;top:265.6px;font-size:15.3px;color:#000"><span class=c>结构体</span></div>
<div style="left:75px;top:290px;width:16px;height:1px;background-image:linear-gradient(90deg,#a0a0a0 50%,transparent 50%);background-size:2px 1px"></div>
<svg style="left:90px;top:278px;" width="26" height="26" viewBox="0 0 26 26"><path d="M3.5 1.8h18.5a1.3 1.3 0 0 1 1.3 1.3V16.8a1.3 1.3 0 0 1-1.3 1.3H11l-4.3 4.3v-4.3H3.5a1.3 1.3 0 0 1-1.3-1.3V3.1a1.3 1.3 0 0 1 1.3-1.3z" fill="#fff" stroke="#5a5a7a" stroke-width="1.4"/><path d="M6.8 5.7h11M6.8 9.4h11M6.8 13.2h5" stroke="#2a8ae0" stroke-width="1.5"/></svg>
<div style="left:119px;top:278px;width:64px;height:24px;background:#0078d7"></div>
<div class="t " style="left:121px;top:290.1px;font-size:15.3px;color:#fff"><span class=c>软元件表</span></div>
<div style="left:75px;top:315px;width:16px;height:1px;background-image:linear-gradient(90deg,#a0a0a0 50%,transparent 50%);background-size:2px 1px"></div>
<svg style="left:90px;top:303px;" width="26" height="26" viewBox="0 0 26 26"><path d="M2.5 7.5L12.5 3.5 23.3 7.5V19.5L13 23.6 2.5 19.5Z" fill="#fff" stroke="#5a5a7a" stroke-width="1.4" stroke-linejoin="round"/><path d="M2.5 7.5L13 11.8 23.3 7.5M13 11.8V23.6" stroke="#5a5a7a" stroke-width="1.4" fill="none"/><path d="M15.5 13.2L21.2 10.8V18.5L15.5 21Z" fill="#1a7ac8"/></svg>
<div class="t " style="left:121px;top:314.6px;font-size:15.3px;color:#000"><span class=c>功能块实例</span></div>
<div style="left:75px;top:339px;width:16px;height:1px;background-image:linear-gradient(90deg,#a0a0a0 50%,transparent 50%);background-size:2px 1px"></div>
<svg style="left:90px;top:327px;" width="26" height="26" viewBox="0 0 26 26"><circle cx="13" cy="12" r="9.8" fill="#1a80c8"/><path d="M7 6.5q3-2 6-1.5l-1 2.5-3 1-2.5 1zM10 11q3-1.5 5 .5l.5 3-1.5 5-2-1v-3.5l-2.5-2zM16 4.5l3 1.5.5 2.5-2 .5-2-2.5zM19.5 11.5l2 1-1.5 3-1-1z" fill="#fff"/><path d="M4 21.5q-4-2 5-10t14-8.5q4 .5-1.5 6" stroke="#6a6a6a" stroke-width="1.5" fill="none"/></svg>
<div class="t " style="left:121px;top:339.1px;font-size:15.3px;color:#000"><span class=c>变量表</span></div>
<div style="left:47px;top:364px;width:16px;height:1px;background-image:linear-gradient(90deg,#a0a0a0 50%,transparent 50%);background-size:2px 1px"></div>
<svg style="left:41.5px;top:358.5px;" width="11" height="11" viewBox="0 0 11 11"><rect x="0.5" y="0.5" width="10" height="10" rx="1.5" fill="#fbfbfb" stroke="#9a9a9a"/><path d="M3 5.5h5" stroke="#3050a0" stroke-width="1.2"/><path d="M5.5 3v5" stroke="#3050a0" stroke-width="1.2"/></svg>
<svg style="left:62px;top:352px;" width="26" height="26" viewBox="0 0 26 26"><rect x="1.4" y="2.1" width="22.6" height="21.1" rx="0.8" fill="#fff" stroke="#5a5a7a" stroke-width="1.4"/><path d="M3 12.9h5.5M8.5 7.4v11M17 7.4v11M17 12.9h5.5" stroke="#1a90d0" stroke-width="1.3"/></svg>
<div class="t " style="left:92px;top:363.6px;font-size:15.3px;color:#000"><span class=c>编程</span></div>
<div style="left:47px;top:388px;width:16px;height:1px;background-image:linear-gradient(90deg,#a0a0a0 50%,transparent 50%);background-size:2px 1px"></div>
<svg style="left:41.5px;top:382.5px;" width="11" height="11" viewBox="0 0 11 11"><rect x="0.5" y="0.5" width="10" height="10" rx="1.5" fill="#fbfbfb" stroke="#9a9a9a"/><path d="M3 5.5h5" stroke="#3050a0" stroke-width="1.2"/></svg>
<svg style="left:62px;top:376px;" width="26" height="26" viewBox="0 0 26 26"><path d="M21 9.5V0.9H1.5V22.5H11" stroke="#5a5a7a" stroke-width="1.4" fill="none"/><path d="M5 3v18M11 3v18M17 3v7" stroke="#5a5a7a" stroke-width="1.1"/><ellipse cx="5" cy="7.3" rx="1.8" ry="2.3" fill="#5a5a7a"/><ellipse cx="11" cy="9.8" rx="1.8" ry="2.3" fill="#5a5a7a"/><ellipse cx="17" cy="7.8" rx="1.8" ry="2.3" fill="#5a5a7a"/><circle cx="19" cy="16.3" r="7" fill="#fff"/><path d="M25.17 15.69 L25.17 16.91 L23.40 17.64 L23.06 18.47 L23.79 20.23 L22.93 21.09 L21.17 20.36 L20.34 20.70 L19.61 22.47 L18.39 22.47 L17.66 20.70 L16.83 20.36 L15.07 21.09 L14.21 20.23 L14.94 18.47 L14.60 17.64 L12.83 16.91 L12.83 15.69 L14.60 14.96 L14.94 14.13 L14.21 12.37 L15.07 11.51 L16.83 12.24 L17.66 11.90 L18.39 10.13 L19.61 10.13 L20.34 11.90 L21.17 12.24 L22.93 11.51 L23.79 12.37 L23.06 14.13 L23.40 14.96Z" fill="#1a8ad0"/><circle cx="19" cy="16.3" r="2.6" fill="none" stroke="#fff" stroke-width="1.2"/></svg>
<div class="t " style="left:92px;top:388.1px;font-size:15.3px;color:#000"><span class=c>配置</span></div>
<div style="left:75px;top:413px;width:16px;height:1px;background-image:linear-gradient(90deg,#a0a0a0 50%,transparent 50%);background-size:2px 1px"></div>
<svg style="left:90px;top:401px;" width="26" height="26" viewBox="0 0 26 26"><path d="M2 12.5h3.5l2-1.5 2.3-3.5 2.4 7.5 2-5 1.8 2 1.6-3.2 2.4 3.5 2.5 1.8" stroke="#1a80d0" stroke-width="1.5" fill="none" stroke-linejoin="round"/><rect x="2.7" y="18.9" width="21" height="5.2" rx="1" fill="#fff" stroke="#5a5a7a" stroke-width="1.4"/><path d="M6 21.5h1.5M10 21.5h8" stroke="#8a8aa0" stroke-width="1.4"/></svg>
<div class="t " style="left:121px;top:412.6px;font-size:15.3px;color:#000"><span class=c>输入滤波</span></div>
<div style="left:75px;top:437px;width:16px;height:1px;background-image:linear-gradient(90deg,#a0a0a0 50%,transparent 50%);background-size:2px 1px"></div>
<svg style="left:90px;top:425px;" width="26" height="26" viewBox="0 0 26 26"><circle cx="12.9" cy="12.1" r="9.8" fill="#1a9e3e"/><path d="M7.6 13.2l3.9 3.8 7.4-8.4" stroke="#fff" stroke-width="2.4" fill="none" stroke-linecap="round" stroke-linejoin="round"/></svg>
<div class="t " style="left:121px;top:437.1px;font-size:15.3px;color:#000">EXP-A</div>
<div style="left:75px;top:462px;width:16px;height:1px;background-image:linear-gradient(90deg,#a0a0a0 50%,transparent 50%);background-size:2px 1px"></div>
<svg style="left:90px;top:450px;" width="26" height="26" viewBox="0 0 26 26"><circle cx="12.9" cy="12.1" r="9.8" fill="#1a9e3e"/><path d="M7.6 13.2l3.9 3.8 7.4-8.4" stroke="#fff" stroke-width="2.4" fill="none" stroke-linecap="round" stroke-linejoin="round"/></svg>
<div class="t " style="left:121px;top:461.6px;font-size:15.3px;color:#000">EXP-B</div>
<div style="left:75px;top:486px;width:16px;height:1px;background-image:linear-gradient(90deg,#a0a0a0 50%,transparent 50%);background-size:2px 1px"></div>
<svg style="left:90px;top:474px;" width="26" height="26" viewBox="0 0 26 26"><circle cx="12.9" cy="12.1" r="9.8" fill="#1a9e3e"/><path d="M7.6 13.2l3.9 3.8 7.4-8.4" stroke="#fff" stroke-width="2.4" fill="none" stroke-linecap="round" stroke-linejoin="round"/></svg>
<div class="t " style="left:121px;top:486.1px;font-size:15.3px;color:#000">COM0</div>
<div style="left:75px;top:511px;width:16px;height:1px;background-image:linear-gradient(90deg,#a0a0a0 50%,transparent 50%);background-size:2px 1px"></div>
<svg style="left:69.5px;top:505.5px;" width="11" height="11" viewBox="0 0 11 11"><rect x="0.5" y="0.5" width="10" height="10" rx="1.5" fill="#fbfbfb" stroke="#9a9a9a"/><path d="M3 5.5h5" stroke="#3050a0" stroke-width="1.2"/></svg>
<svg style="left:90px;top:499px;" width="26" height="26" viewBox="0 0 26 26"><circle cx="12.9" cy="12.1" r="9.8" fill="#1a9e3e"/><path d="M7.6 13.2l3.9 3.8 7.4-8.4" stroke="#fff" stroke-width="2.4" fill="none" stroke-linecap="round" stroke-linejoin="round"/></svg>
<div class="t " style="left:121px;top:510.6px;font-size:15.3px;color:#000"><span class=c>以太网</span></div>
<div style="left:103px;top:535px;width:16px;height:1px;background-image:linear-gradient(90deg,#a0a0a0 50%,transparent 50%);background-size:2px 1px"></div>
<svg style="left:118px;top:523px;" width="26" height="26" viewBox="0 0 26 26"><circle cx="12.9" cy="12.1" r="9.8" fill="#1a9e3e"/><path d="M7.6 13.2l3.9 3.8 7.4-8.4" stroke="#fff" stroke-width="2.4" fill="none" stroke-linecap="round" stroke-linejoin="round"/></svg>
<div style="left:147px;top:524px;width:105px;height:24px;background:#ccf7ff"></div>
<div class="t " style="left:149px;top:535.1px;font-size:15.3px;color:#000">ModbusTcp_0</div>
<div style="left:75px;top:560px;width:16px;height:1px;background-image:linear-gradient(90deg,#a0a0a0 50%,transparent 50%);background-size:2px 1px"></div>
<svg style="left:90px;top:548px;" width="26" height="26" viewBox="0 0 26 26"><circle cx="12.9" cy="12.1" r="9.8" fill="#1a9e3e"/><path d="M7.6 13.2l3.9 3.8 7.4-8.4" stroke="#fff" stroke-width="2.4" fill="none" stroke-linecap="round" stroke-linejoin="round"/></svg>
<div class="t " style="left:121px;top:559.6px;font-size:15.3px;color:#000"><span class=c>模块配置</span></div>
<div style="left:75px;top:584px;width:16px;height:1px;background-image:linear-gradient(90deg,#a0a0a0 50%,transparent 50%);background-size:2px 1px"></div>
<svg style="left:90px;top:572px;" width="26" height="26" viewBox="0 0 26 26"><ellipse cx="3.8" cy="11" rx="2.8" ry="3.5" fill="#7a7a7a"/><path d="M13 1.2L20.5 2.8 21 15 14.5 22.5H11Q4 19 4.8 12.5 5.8 5 13 1.2Z" fill="#1a7ac8"/><path d="M20.5 2.8L21.7 3.8V18L15.5 22.5 13.2 18.5 15.3 9Z" fill="#66c4c8"/><path d="M13.5 10.5L21.5 14.5 24 18.5 22.5 22.8 12.5 18.5Z" fill="#858585"/><ellipse cx="22.3" cy="18.6" rx="1.9" ry="4" fill="#a0a0a0"/></svg>
<div class="t " style="left:121px;top:584.1px;font-size:15.3px;color:#000"><span class=c>电子凸轮</span></div>
<div style="left:75px;top:609px;width:16px;height:1px;background-image:linear-gradient(90deg,#a0a0a0 50%,transparent 50%);background-size:2px 1px"></div>
<svg style="left:90px;top:597px;" width="26" height="26" viewBox="0 0 26 26"><rect x="3.1" y="2.2" width="8.7" height="21.5" rx="0.8" fill="#5a5a7a"/><path d="M5.6 5v16M8.5 7v2M8.5 11v10" stroke="#fff" stroke-width="1.1"/><circle cx="18.4" cy="7.9" r="2.3" fill="none" stroke="#1a8ad0" stroke-width="1.6"/><rect x="13.3" y="12.2" width="10.7" height="11" fill="#5a5a7a"/><circle cx="18.6" cy="17.7" r="3.3" fill="none" stroke="#fff" stroke-width="1.2"/><circle cx="18.6" cy="17.7" r="1.2" fill="#fff"/></svg>
<div class="t " style="left:121px;top:608.6px;font-size:15.3px;color:#000"><span class=c>运动控制轴</span></div>
<div style="left:75px;top:633px;width:16px;height:1px;background-image:linear-gradient(90deg,#a0a0a0 50%,transparent 50%);background-size:2px 1px"></div>
<svg style="left:90px;top:621px;" width="26" height="26" viewBox="0 0 26 26"><path d="M22.25 11.24 L22.25 13.36 L19.44 14.71 L18.82 16.21 L19.85 19.15 L18.35 20.65 L15.41 19.62 L13.91 20.24 L12.56 23.05 L10.44 23.05 L9.09 20.24 L7.59 19.62 L4.65 20.65 L3.15 19.15 L4.18 16.21 L3.56 14.71 L0.75 13.36 L0.75 11.24 L3.56 9.89 L4.18 8.39 L3.15 5.45 L4.65 3.95 L7.59 4.98 L9.09 4.36 L10.44 1.55 L12.56 1.55 L13.91 4.36 L15.41 4.98 L18.35 3.95 L19.85 5.45 L18.82 8.39 L19.44 9.89Z" fill="none" stroke="#5a5a7a" stroke-width="1.3" stroke-linejoin="round"/><circle cx="11.5" cy="12.3" r="4.3" fill="none" stroke="#5a5a7a" stroke-width="1.3"/><circle cx="11.5" cy="12.3" r="2" fill="#1a8ad0"/></svg>
<div class="t " style="left:121px;top:633.1px;font-size:15.3px;color:#000"><span class=c>轴组设置</span></div>
<div style="left:75px;top:658px;width:16px;height:1px;background-image:linear-gradient(90deg,#a0a0a0 50%,transparent 50%);background-size:2px 1px"></div>
<svg style="left:90px;top:646px;" width="26" height="26" viewBox="0 0 26 26"><path d="M1 6.1H18V2.6L25 9.7H1Z" fill="#1a7ac8"/><path d="M25 14.6H8V21.6L1 14.6Z" fill="#5a5a7a"/><rect x="1" y="14.6" width="24" height="3.5" fill="#5a5a7a"/></svg>
<div style="left:119px;top:645px;width:69px;height:25px;background:#fdf1e6"></div>
<div class="t " style="left:121px;top:657.6px;font-size:15.3px;color:#c8c8c8">EtherCAT</div>
<div style="left:75px;top:682px;width:16px;height:1px;background-image:linear-gradient(90deg,#a0a0a0 50%,transparent 50%);background-size:2px 1px"></div>
<svg style="left:90px;top:670px;" width="26" height="26" viewBox="0 0 26 26"><circle cx="12.9" cy="12.1" r="9.8" fill="#1a9e3e"/><path d="M7.6 13.2l3.9 3.8 7.4-8.4" stroke="#fff" stroke-width="2.4" fill="none" stroke-linecap="round" stroke-linejoin="round"/></svg>
<div class="t " style="left:121px;top:682.1px;font-size:15.3px;color:#000">EtherNet/IP</div>
<div style="left:75px;top:707px;width:16px;height:1px;background-image:linear-gradient(90deg,#a0a0a0 50%,transparent 50%);background-size:2px 1px"></div>
<svg style="left:69.5px;top:701.5px;" width="11" height="11" viewBox="0 0 11 11"><rect x="0.5" y="0.5" width="10" height="10" rx="1.5" fill="#fbfbfb" stroke="#9a9a9a"/><path d="M3 5.5h5" stroke="#3050a0" stroke-width="1.2"/><path d="M5.5 3v5" stroke="#3050a0" stroke-width="1.2"/></svg>
<svg style="left:90px;top:695px;" width="26" height="26" viewBox="0 0 26 26"><path d="M4 12V3.2h6.3l1.3 1.5H22.5V12" fill="#fff" stroke="#5a5a7a" stroke-width="1.3"/><path d="M6 8.6h15" stroke="#a0d8a0" stroke-width="1.8" stroke-dasharray="1.8 1.6"/><rect x="3.4" y="11.7" width="19.6" height="10.3" rx="0.5" fill="#1a7ac8"/><text x="13.2" y="20.6" font-size="9.5" font-weight="bold" font-family="Liberation Mono" fill="#fff" text-anchor="middle" textLength="17">OPC</text></svg>
<div class="t " style="left:121px;top:706.6px;font-size:15.3px;color:#000">OPC UA</div>
<div style="left:47px;top:731px;width:16px;height:1px;background-image:linear-gradient(90deg,#a0a0a0 50%,transparent 50%);background-size:2px 1px"></div>
<svg style="left:41.5px;top:725.5px;" width="11" height="11" viewBox="0 0 11 11"><rect x="0.5" y="0.5" width="10" height="10" rx="1.5" fill="#fbfbfb" stroke="#9a9a9a"/><path d="M3 5.5h5" stroke="#3050a0" stroke-width="1.2"/></svg>
<svg style="left:62px;top:719px;" width="26" height="26" viewBox="0 0 26 26"><path d="M1 6h9M1 9.8h8M1 13.6h7M1 17.4h6M4 21h4" stroke="#5a5a7a" stroke-width="1.3"/><path d="M8 21L16 4.8 20 14H24.7" stroke="#1a90d0" stroke-width="1.5" fill="none" stroke-linejoin="round"/></svg>
<div class="t " style="left:92px;top:731.1px;font-size:15.3px;color:#000"><span class=c>变量监控表</span></div>
<div style="left:75px;top:756px;width:16px;height:1px;background-image:linear-gradient(90deg,#a0a0a0 50%,transparent 50%);background-size:2px 1px"></div>
<svg style="left:90px;top:744px;" width="26" height="26" viewBox="0 0 26 26"><rect x="3.9" y="1.9" width="18.3" height="21.6" fill="#fff" stroke="#5a5a7a" stroke-width="1.3"/><path d="M6.5 5h13.3M6.5 7.3h13.3M6.5 9.6h13.3M6.5 11.9h13.3M6.5 14.2h13.3M6.5 16.5h13.3M6.5 18.8h13.3M6.5 21h6" stroke="#2a8ad8" stroke-width="1.4"/></svg>
<div class="t " style="left:121px;top:755.6px;font-size:15.3px;color:#000">MAIN</div>
<div style="left:47px;top:780px;width:16px;height:1px;background-image:linear-gradient(90deg,#a0a0a0 50%,transparent 50%);background-size:2px 1px"></div>
<svg style="left:62px;top:768px;" width="26" height="26" viewBox="0 0 26 26"><rect x="1.3" y="1.9" width="22" height="21.6" fill="#fff" stroke="#5a5a7a" stroke-width="1.3"/><path d="M3.5 5.5L18 19.5M3.5 19.5L9.5 13.3M12.5 10.3L18.5 5" stroke="#1a8ad0" stroke-width="1.4" fill="none"/><path d="M16 2.5l5.5 2.5-4 4.5zM16.5 15.5l4.8 4-5.8 1.8z" fill="#1a8ad0"/></svg>
<div class="t " style="left:92px;top:780.1px;font-size:15.3px;color:#000"><span class=c>交叉引用表</span></div>
<div style="left:47px;top:805px;width:16px;height:1px;background-image:linear-gradient(90deg,#a0a0a0 50%,transparent 50%);background-size:2px 1px"></div>
<svg style="left:62px;top:793px;" width="26" height="26" viewBox="0 0 26 26"><path d="M4.5 7V19.5A8 3 0 0 0 20.5 19.5V7" fill="#fff" stroke="#5a5a7a" stroke-width="1.4"/><path d="M4.5 11.5A8 3 0 0 0 20.5 11.5M4.5 15.5A8 3 0 0 0 20.5 15.5" stroke="#5a5a7a" stroke-width="1.4" fill="none"/><ellipse cx="12.5" cy="6.5" rx="8" ry="3.2" fill="#1a7ac8" stroke="#5a5a7a" stroke-width="1"/></svg>
<div class="t " style="left:92px;top:804.6px;font-size:15.3px;color:#000"><span class=c>元件使用表</span></div>
<div style="left:47px;top:829px;width:16px;height:1px;background-image:linear-gradient(90deg,#a0a0a0 50%,transparent 50%);background-size:2px 1px"></div>
<svg style="left:62px;top:817px;" width="26" height="26" viewBox="0 0 26 26"><rect x="1.9" y="3.6" width="21.2" height="17.5" fill="#d3e8cc" stroke="#5a5a7a" stroke-width="1.3"/><path d="M7.5 4.5v16M12.5 4.5v16M17.5 4.5v16M3 12.3h19" stroke="#9aa89a" stroke-width="1"/><path d="M3.5 13Q6.5 1 10 10.5T16 16 22 7" stroke="#1a8ad0" stroke-width="1.6" fill="none"/></svg>
<div class="t " style="left:92px;top:829.1px;font-size:15.3px;color:#000">Trace</div>
<div style="left:47px;top:854px;width:16px;height:1px;background-image:linear-gradient(90deg,#a0a0a0 50%,transparent 50%);background-size:2px 1px"></div>
<svg style="left:62px;top:842px;" width="26" height="26" viewBox="0 0 26 26"><path d="M21 8V2.2H1.9V22.5H11" stroke="#5a5a7a" stroke-width="1.2" fill="none"/><path d="M6.5 10v9M9.5 6v13M12.5 9v8" stroke="#1a8ad0" stroke-width="1.6"/><path d="M12 21l9-8.5 3.5 3.5-9 8H12z" fill="#1a7ac8"/></svg>
<div class="t " style="left:92px;top:853.6px;font-size:15.3px;color:#000"><span class=c>数据记录</span></div>
<div style="left:409px;top:146px;width:893px;height:761px;border:1px solid #b0b0b0;background:#f0f0f0"></div>
<svg style="left:410px;top:152px;" width="19" height="19" viewBox="0 0 19 19"><rect x="0.5" y="0.5" width="18" height="18" fill="#f4f4f4" stroke="#a0a0a0"/><path d="M12 5v9l-6-4.5z" fill="none" stroke="#333" stroke-width="1.2"/><path d="M18.5 0.5v18h-18" stroke="#6a6a6a" fill="none"/></svg>
<svg style="left:1275px;top:152px;" width="19" height="19" viewBox="0 0 19 19"><rect x="0.5" y="0.5" width="18" height="18" fill="#f4f4f4" stroke="#a0a0a0"/><path d="M7 5v9l6-4.5z" fill="none" stroke="#333" stroke-width="1.2"/><path d="M18.5 0.5v18h-18" stroke="#6a6a6a" fill="none"/></svg>
<svg style="left:432px;top:147px;" width="110" height="32" viewBox="0 0 110 32"><path d="M1.5 31L29.8 2.4H100.4L104 6.2" fill="#f0f0f0" stroke="#a8a8a8" stroke-width="1.1"/><path d="M4 30.5L30.5 3.6H100" stroke="#fafafa" stroke-width="1" fill="none"/></svg>
<svg style="left:465px;top:153px;" width="19" height="20" viewBox="0 0 19 20"><rect x="1" y="0.8" width="15.5" height="18" rx="0.5" fill="#fff" stroke="#555" stroke-width="1.2"/><path d="M3 3h11.5M3 5.5h11.5M3 8h8" stroke="#2a9ae0" stroke-width="1.2"/><rect x="10" y="11" width="9" height="9" fill="#f0f0f0"/><text x="14.6" y="19.5" font-size="9" fill="#1a8ad8" font-family="Liberation Sans" font-weight="bold" text-anchor="middle">M</text></svg>
<div class="t " style="left:487px;top:163px;font-size:15px;color:#222">MAIN</div>
<svg style="left:512px;top:147px;" width="150" height="33" viewBox="0 0 150 33"><path d="M0.5 32L28 4q3-3 7-3H145q3.5 0 3.5 3.5V32" fill="#fcfcfc" stroke="#a8a8a8" stroke-width="1.1"/></svg>
<svg style="left:541px;top:152px;" width="22" height="22" viewBox="0 0 22 22"><path d="M2 1.5h17a1 1 0 0 1 1 1V14a1 1 0 0 1-1 1H9l-4 4.5V15H2a1 1 0 0 1-1-1V2.5a1 1 0 0 1 1-1z" fill="#fff" stroke="#4a4a6a" stroke-width="1.4"/><path d="M4.5 5.5h12M4.5 8.5h12M4.5 11.5h7" stroke="#2a8ae0" stroke-width="1.4"/></svg>
<div class="t " style="left:568px;top:163px;font-size:15px;color:#111;font-weight:bold;letter-spacing:-0.3px"><span class=c>软元件表</span></div>
<svg style="left:639px;top:159px;" width="11" height="11" viewBox="0 0 11 11"><path d="M1 1l9 9M10 1l-9 9" stroke="#111" stroke-width="1.8"/></svg>
<div style="left:410px;top:178px;width:103px;height:1px;background:#b8b8b8"></div>
<div style="left:661px;top:178px;width:640px;height:1px;background:#b8b8b8"></div>
<div style="left:411px;top:179px;width:889px;height:37px;background:#f0f0f0"></div>
<div style="left:743px;top:181px;width:32px;height:32px;border-top:1px solid #a8a8a8;border-left:1px solid #a8a8a8;border-right:1px solid #fff;border-bottom:1px solid #fff;background:#f4f4f4"></div>
<div class="t " style="left:439px;top:199px;font-size:16px;color:#111;font-weight:bold;transform:translateX(-50%)">X</div>
<div class="t " style="left:503px;top:199px;font-size:16px;color:#111;font-weight:bold;transform:translateX(-50%)">Y</div>
<div class="t " style="left:567px;top:199px;font-size:16px;color:#111;font-weight:bold;transform:translateX(-50%)">M</div>
<div class="t " style="left:631px;top:199px;font-size:16px;color:#111;font-weight:bold;transform:translateX(-50%)">S</div>
<div class="t " style="left:695px;top:199px;font-size:16px;color:#111;font-weight:bold;transform:translateX(-50%)">B</div>
<div class="t " style="left:759px;top:199px;font-size:16px;color:#111;font-weight:bold;transform:translateX(-50%)">D</div>
<div class="t " style="left:822px;top:199px;font-size:16px;color:#111;font-weight:bold;transform:translateX(-50%)">R</div>
<div class="t " style="left:885px;top:199px;font-size:13px;color:#222;font-weight:bold;transform:translateX(-50%) scaleY(1.3)">W</div>
<div style="left:471px;top:191px;width:1px;height:12px;background:#b0b0b0"></div>
<div style="left:535px;top:191px;width:1px;height:12px;background:#b0b0b0"></div>
<div style="left:599px;top:191px;width:1px;height:12px;background:#b0b0b0"></div>
<div style="left:663px;top:191px;width:1px;height:12px;background:#b0b0b0"></div>
<div style="left:727px;top:191px;width:1px;height:12px;background:#b0b0b0"></div>
<div style="left:791px;top:191px;width:1px;height:12px;background:#b0b0b0"></div>
<div style="left:855px;top:191px;width:1px;height:12px;background:#b0b0b0"></div>
<div style="left:414px;top:214px;width:884px;height:43px;border-top:3px solid #8a8a8a;border-left:2px solid #8a8a8a;border-right:1px solid #fff;background:#f0f0f0"></div>
<div class="t " style="left:426px;top:235px;font-size:14.7px;color:#111"><span class=c>批量数据类型</span></div>
<div style="left:522px;top:222px;width:72px;height:26px;background:#fff;border-bottom:1px solid #a8a8a8;border-radius:2px"></div>
<div class="t " style="left:527px;top:234px;font-size:13.5px;color:#111">0</div>
<div class="t " style="left:602px;top:236px;font-size:14px;color:#111">--</div>
<div style="left:626px;top:222px;width:71px;height:26px;background:#fff;border-bottom:1px solid #a8a8a8;border-radius:2px"></div>
<div class="t " style="left:630px;top:234px;font-size:13.5px;color:#111">0</div>
<div style="left:706px;top:223px;width:88px;height:24px;background:#fcfcfc;border:1px solid #dcdcdc;border-bottom-color:#b0b0b0;border-radius:3px"></div>
<div class="t " style="left:710px;top:236px;font-size:13.5px;color:#111">INT</div>
<svg style="left:777px;top:231px;" width="10" height="7" viewBox="0 0 10 7"><path d="M0.5 1l4.5 4.5L9.5 1" stroke="#555" stroke-width="1.1" fill="none"/></svg>
<div style="left:839px;top:222px;width:72px;height:26px;background:#fff;border-bottom:1px solid #a8a8a8;border-radius:2px"></div>
<div class="t " style="left:843px;top:234px;font-size:13.5px;color:#111">200</div>
<div style="left:918px;top:222px;width:54px;height:26px;background:#fbfbfb;border:1.5px solid #1a78d0;border-radius:4px"></div>
<div class="t " style="left:945px;top:235px;font-size:14.5px;color:#111;transform:translateX(-50%)"><span class=c>跳转</span></div>
<svg style="left:1010px;top:225px;" width="17" height="17" viewBox="0 0 17 17"><circle cx="8.5" cy="8.5" r="8" fill="#0067c0"/><circle cx="8.5" cy="8.5" r="3.8" fill="#fff"/></svg>
<div class="t " style="left:1030px;top:234px;font-size:15px;color:#111"><span class=c>十进制</span></div>
<svg style="left:1091px;top:225px;" width="17" height="17" viewBox="0 0 17 17"><circle cx="8.5" cy="8.5" r="7.5" fill="#fdfdfd" stroke="#6a6a6a" stroke-width="1.1"/></svg>
<div class="t " style="left:1111px;top:234px;font-size:15px;color:#111"><span class=c>十六进制</span></div>
<svg style="left:1187px;top:225px;" width="17" height="17" viewBox="0 0 17 17"><circle cx="8.5" cy="8.5" r="7.5" fill="#fdfdfd" stroke="#6a6a6a" stroke-width="1.1"/></svg>
<div class="t " style="left:1207px;top:234px;font-size:15px;color:#111"><span class=c>二进制</span></div>
<div style="left:413px;top:256px;width:885px;height:644px;border-top:3px solid #828282;border-left:4px solid #8a8a8a;border-bottom:1px solid #fff;border-right:1px solid #fff;background:#f0f0f0"></div>
<div style="left:419px;top:258px;width:853px;height:21px;background:#f0f0f0"></div>
<div style="left:419px;top:258px;width:96px;height:20px;background:#0080ff"></div>
<div class="t " style="left:421px;top:269px;font-size:15px;color:#000"><span class=c>序号</span></div>
<div class="t " style="left:519px;top:269px;font-size:15px;color:#000"><span class=c>变量名</span></div>
<div class="t " style="left:617px;top:269px;font-size:15px;color:#000"><span class=c>数据类型</span></div>
<div class="t " style="left:715px;top:269px;font-size:15px;color:#000"><span class=c>掉电保持</span></div>
<div class="t " style="left:813px;top:269px;font-size:15px;color:#000"><span class=c>当前值</span></div>
<svg style="left:911px;top:259px;" width="16" height="16" viewBox="0 0 16 16"><rect x="0.5" y="0.5" width="15" height="15" rx="3" fill="#0067c0"/><path d="M3.5 8l3 3 6-6.5" stroke="#fff" stroke-width="1.6" fill="none"/></svg>
<div class="t " style="left:927px;top:269px;font-size:15px;color:#000"><span class=c>数据值</span>1</div>
<svg style="left:1009px;top:259px;" width="16" height="16" viewBox="0 0 16 16"><rect x="1" y="1" width="14" height="14" rx="3" fill="#fff" stroke="#555" stroke-width="1.1"/></svg>
<div class="t " style="left:1025px;top:269px;font-size:15px;color:#000"><span class=c>数据值</span>2</div>
<svg style="left:1107px;top:259px;" width="16" height="16" viewBox="0 0 16 16"><rect x="1" y="1" width="14" height="14" rx="3" fill="#fff" stroke="#555" stroke-width="1.1"/></svg>
<div class="t " style="left:1123px;top:269px;font-size:15px;color:#000"><span class=c>数据值</span>3</div>
<svg style="left:1205px;top:259px;" width="16" height="16" viewBox="0 0 16 16"><rect x="1" y="1" width="14" height="14" rx="3" fill="#fff" stroke="#555" stroke-width="1.1"/></svg>
<div class="t " style="left:1221px;top:269px;font-size:15px;color:#000"><span class=c>数据值</span>4</div>
<div style="left:809px;top:278.9px;width:463px;height:598.6px;background:#fff3ee"></div>
<div style="left:515px;top:278.9px;width:294px;height:598.6px;background:#fff"></div>
<div style="left:419px;top:278.9px;width:96px;height:598.6px;background:#0080ff"></div>
<div style="left:419px;top:277px;width:853px;height:1px;background:#a0a0a0"></div>
<div style="left:515px;top:298px;width:757px;height:1px;background:#a0a0a0"></div>
<div style="left:419px;top:298.5px;width:96px;height:1.5px;background:#f4e4d0"></div>
<div style="left:515px;top:319px;width:757px;height:1px;background:#a0a0a0"></div>
<div style="left:419px;top:319.5px;width:96px;height:1.5px;background:#f4e4d0"></div>
<div style="left:515px;top:339px;width:757px;height:1px;background:#a0a0a0"></div>
<div style="left:419px;top:339.5px;width:96px;height:1.5px;background:#f4e4d0"></div>
<div style="left:515px;top:360px;width:757px;height:1px;background:#a0a0a0"></div>
<div style="left:419px;top:360.5px;width:96px;height:1.5px;background:#f4e4d0"></div>
<div style="left:515px;top:381px;width:757px;height:1px;background:#a0a0a0"></div>
<div style="left:419px;top:381.5px;width:96px;height:1.5px;background:#f4e4d0"></div>
<div style="left:515px;top:402px;width:757px;height:1px;background:#a0a0a0"></div>
<div style="left:419px;top:402.5px;width:96px;height:1.5px;background:#f4e4d0"></div>
<div style="left:515px;top:423px;width:757px;height:1px;background:#a0a0a0"></div>
<div style="left:419px;top:423.5px;width:96px;height:1.5px;background:#f4e4d0"></div>
<div style="left:515px;top:444px;width:757px;height:1px;background:#a0a0a0"></div>
<div style="left:419px;top:444.5px;width:96px;height:1.5px;background:#f4e4d0"></div>
<div style="left:515px;top:465px;width:757px;height:1px;background:#a0a0a0"></div>
<div style="left:419px;top:465.5px;width:96px;height:1.5px;background:#f4e4d0"></div>
<div style="left:515px;top:485px;width:757px;height:1px;background:#a0a0a0"></div>
<div style="left:419px;top:485.5px;width:96px;height:1.5px;background:#f4e4d0"></div>
<div style="left:515px;top:506px;width:757px;height:1px;background:#a0a0a0"></div>
<div style="left:419px;top:506.5px;width:96px;height:1.5px;background:#f4e4d0"></div>
<div style="left:515px;top:527px;width:757px;height:1px;background:#a0a0a0"></div>
<div style="left:419px;top:527.5px;width:96px;height:1.5px;background:#f4e4d0"></div>
<div style="left:515px;top:548px;width:757px;height:1px;background:#a0a0a0"></div>
<div style="left:419px;top:548.5px;width:96px;height:1.5px;background:#f4e4d0"></div>
<div style="left:515px;top:569px;width:757px;height:1px;background:#a0a0a0"></div>
<div style="left:419px;top:569.5px;width:96px;height:1.5px;background:#f4e4d0"></div>
<div style="left:515px;top:590px;width:757px;height:1px;background:#a0a0a0"></div>
<div style="left:419px;top:590.5px;width:96px;height:1.5px;background:#f4e4d0"></div>
<div style="left:515px;top:610px;width:757px;height:1px;background:#a0a0a0"></div>
<div style="left:419px;top:610.5px;width:96px;height:1.5px;background:#f4e4d0"></div>
<div style="left:515px;top:631px;width:757px;height:1px;background:#a0a0a0"></div>
<div style="left:419px;top:631.5px;width:96px;height:1.5px;background:#f4e4d0"></div>
<div style="left:515px;top:652px;width:757px;height:1px;background:#a0a0a0"></div>
<div style="left:419px;top:652.5px;width:96px;height:1.5px;background:#f4e4d0"></div>
<div style="left:515px;top:673px;width:757px;height:1px;background:#a0a0a0"></div>
<div style="left:419px;top:673.5px;width:96px;height:1.5px;background:#f4e4d0"></div>
<div style="left:515px;top:694px;width:757px;height:1px;background:#a0a0a0"></div>
<div style="left:419px;top:694.5px;width:96px;height:1.5px;background:#f4e4d0"></div>
<div style="left:515px;top:715px;width:757px;height:1px;background:#a0a0a0"></div>
<div style="left:419px;top:715.5px;width:96px;height:1.5px;background:#f4e4d0"></div>
<div style="left:515px;top:736px;width:757px;height:1px;background:#a0a0a0"></div>
<div style="left:419px;top:736.5px;width:96px;height:1.5px;background:#f4e4d0"></div>
<div style="left:515px;top:756px;width:757px;height:1px;background:#a0a0a0"></div>
<div style="left:419px;top:756.5px;width:96px;height:1.5px;background:#f4e4d0"></div>
<div style="left:515px;top:777px;width:757px;height:1px;background:#a0a0a0"></div>
<div style="left:419px;top:777.5px;width:96px;height:1.5px;background:#f4e4d0"></div>
<div style="left:515px;top:798px;width:757px;height:1px;background:#a0a0a0"></div>
<div style="left:419px;top:798.5px;width:96px;height:1.5px;background:#f4e4d0"></div>
<div style="left:515px;top:819px;width:757px;height:1px;background:#a0a0a0"></div>
<div style="left:419px;top:819.5px;width:96px;height:1.5px;background:#f4e4d0"></div>
<div style="left:515px;top:840px;width:757px;height:1px;background:#a0a0a0"></div>
<div style="left:419px;top:840.5px;width:96px;height:1.5px;background:#f4e4d0"></div>
<div style="left:515px;top:861px;width:757px;height:1px;background:#a0a0a0"></div>
<div style="left:419px;top:861.5px;width:96px;height:1.5px;background:#f4e4d0"></div>
<div style="left:613px;top:258px;width:1px;height:620px;background:#a8a8a8"></div>
<div style="left:711px;top:258px;width:1px;height:620px;background:#a8a8a8"></div>
<div style="left:809px;top:258px;width:1px;height:620px;background:#a8a8a8"></div>
<div style="left:907px;top:258px;width:1px;height:620px;background:#a8a8a8"></div>
<div style="left:1005px;top:258px;width:1px;height:620px;background:#a8a8a8"></div>
<div style="left:1103px;top:258px;width:1px;height:620px;background:#a8a8a8"></div>
<div style="left:1201px;top:258px;width:1px;height:620px;background:#a8a8a8"></div>
<div style="left:515px;top:258px;width:1px;height:20px;background:#c8c8c8"></div>
<div class="t " style="left:421px;top:288.59999999999997px;font-size:15.5px;color:#000">198</div>
<div class="t " style="left:519.5px;top:288.59999999999997px;font-size:15.5px;color:#000">D197</div>
<div class="t " style="left:617px;top:288.59999999999997px;font-size:15px;color:#000">INT</div>
<div class="t " style="left:716px;top:289.59999999999997px;font-size:15px;color:#000"><span class=c>不保持</span></div>
<div class="t " style="left:814px;top:288.59999999999997px;font-size:15px;color:#000">0</div>
<div class="t " style="left:421px;top:309.45px;font-size:15.5px;color:#000">199</div>
<div class="t " style="left:519.5px;top:309.45px;font-size:15.5px;color:#000">D198</div>
<div class="t " style="left:617px;top:309.45px;font-size:15px;color:#000">INT</div>
<div class="t " style="left:716px;top:310.45px;font-size:15px;color:#000"><span class=c>不保持</span></div>
<div class="t " style="left:814px;top:309.45px;font-size:15px;color:#000">0</div>
<div class="t " style="left:421px;top:330.29999999999995px;font-size:15.5px;color:#000">200</div>
<div class="t " style="left:519.5px;top:330.29999999999995px;font-size:15.5px;color:#000">D199</div>
<div class="t " style="left:617px;top:330.29999999999995px;font-size:15px;color:#000">INT</div>
<div class="t " style="left:716px;top:331.29999999999995px;font-size:15px;color:#000"><span class=c>不保持</span></div>
<div class="t " style="left:814px;top:330.29999999999995px;font-size:15px;color:#000">0</div>
<div class="t " style="left:421px;top:351.15px;font-size:15.5px;color:#000">201</div>
<div class="t " style="left:519.5px;top:351.15px;font-size:15.5px;color:#000">D200</div>
<div class="t " style="left:617px;top:351.15px;font-size:15px;color:#000">INT</div>
<div class="t " style="left:716px;top:352.15px;font-size:15px;color:#000"><span class=c>不保持</span></div>
<div class="t " style="left:814px;top:351.15px;font-size:15px;color:#000">1</div>
<div class="t " style="left:421px;top:371.99999999999994px;font-size:15.5px;color:#000">202</div>
<div class="t " style="left:519.5px;top:371.99999999999994px;font-size:15.5px;color:#000">D201</div>
<div class="t " style="left:617px;top:371.99999999999994px;font-size:15px;color:#000">INT</div>
<div class="t " style="left:716px;top:372.99999999999994px;font-size:15px;color:#000"><span class=c>不保持</span></div>
<div class="t " style="left:814px;top:371.99999999999994px;font-size:15px;color:#000">2</div>
<div class="t " style="left:421px;top:392.84999999999997px;font-size:15.5px;color:#000">203</div>
<div class="t " style="left:519.5px;top:392.84999999999997px;font-size:15.5px;color:#000">D202</div>
<div class="t " style="left:617px;top:392.84999999999997px;font-size:15px;color:#000">INT</div>
<div class="t " style="left:716px;top:393.84999999999997px;font-size:15px;color:#000"><span class=c>不保持</span></div>
<div class="t " style="left:814px;top:392.84999999999997px;font-size:15px;color:#000">3</div>
<div class="t " style="left:421px;top:413.7px;font-size:15.5px;color:#000">204</div>
<div class="t " style="left:519.5px;top:413.7px;font-size:15.5px;color:#000">D203</div>
<div class="t " style="left:617px;top:413.7px;font-size:15px;color:#000">INT</div>
<div class="t " style="left:716px;top:414.7px;font-size:15px;color:#000"><span class=c>不保持</span></div>
<div class="t " style="left:814px;top:413.7px;font-size:15px;color:#000">4</div>
<div class="t " style="left:421px;top:434.55px;font-size:15.5px;color:#000">205</div>
<div class="t " style="left:519.5px;top:434.55px;font-size:15.5px;color:#000">D204</div>
<div class="t " style="left:617px;top:434.55px;font-size:15px;color:#000">INT</div>
<div class="t " style="left:716px;top:435.55px;font-size:15px;color:#000"><span class=c>不保持</span></div>
<div class="t " style="left:814px;top:434.55px;font-size:15px;color:#000">5</div>
<div class="t " style="left:421px;top:455.4px;font-size:15.5px;color:#000">206</div>
<div class="t " style="left:519.5px;top:455.4px;font-size:15.5px;color:#000">D205</div>
<div class="t " style="left:617px;top:455.4px;font-size:15px;color:#000">INT</div>
<div class="t " style="left:716px;top:456.4px;font-size:15px;color:#000"><span class=c>不保持</span></div>
<div class="t " style="left:814px;top:455.4px;font-size:15px;color:#000">6</div>
<div class="t " style="left:421px;top:476.24999999999994px;font-size:15.5px;color:#000">207</div>
<div class="t " style="left:519.5px;top:476.24999999999994px;font-size:15.5px;color:#000">D206</div>
<div class="t " style="left:617px;top:476.24999999999994px;font-size:15px;color:#000">INT</div>
<div class="t " style="left:716px;top:477.24999999999994px;font-size:15px;color:#000"><span class=c>不保持</span></div>
<div class="t " style="left:814px;top:476.24999999999994px;font-size:15px;color:#000">7</div>
<div class="t " style="left:421px;top:497.09999999999997px;font-size:15.5px;color:#000">208</div>
<div class="t " style="left:519.5px;top:497.09999999999997px;font-size:15.5px;color:#000">D207</div>
<div class="t " style="left:617px;top:497.09999999999997px;font-size:15px;color:#000">INT</div>
<div class="t " style="left:716px;top:498.09999999999997px;font-size:15px;color:#000"><span class=c>不保持</span></div>
<div class="t " style="left:814px;top:497.09999999999997px;font-size:15px;color:#000">8</div>
<div class="t " style="left:421px;top:517.95px;font-size:15.5px;color:#000">209</div>
<div class="t " style="left:519.5px;top:517.95px;font-size:15.5px;color:#000">D208</div>
<div class="t " style="left:617px;top:517.95px;font-size:15px;color:#000">INT</div>
<div class="t " style="left:716px;top:518.95px;font-size:15px;color:#000"><span class=c>不保持</span></div>
<div class="t " style="left:814px;top:517.95px;font-size:15px;color:#000">9</div>
<div class="t " style="left:421px;top:538.8000000000001px;font-size:15.5px;color:#000">210</div>
<div class="t " style="left:519.5px;top:538.8000000000001px;font-size:15.5px;color:#000">D209</div>
<div class="t " style="left:617px;top:538.8000000000001px;font-size:15px;color:#000">INT</div>
<div class="t " style="left:716px;top:539.8000000000001px;font-size:15px;color:#000"><span class=c>不保持</span></div>
<div class="t " style="left:814px;top:538.8000000000001px;font-size:15px;color:#000">10</div>
<div class="t " style="left:421px;top:559.6500000000001px;font-size:15.5px;color:#000">211</div>
<div class="t " style="left:519.5px;top:559.6500000000001px;font-size:15.5px;color:#000">D210</div>
<div class="t " style="left:617px;top:559.6500000000001px;font-size:15px;color:#000">INT</div>
<div class="t " style="left:716px;top:560.6500000000001px;font-size:15px;color:#000"><span class=c>不保持</span></div>
<div class="t " style="left:814px;top:559.6500000000001px;font-size:15px;color:#000">0</div>
<div class="t " style="left:421px;top:580.5px;font-size:15.5px;color:#000">212</div>
<div class="t " style="left:519.5px;top:580.5px;font-size:15.5px;color:#000">D211</div>
<div class="t " style="left:617px;top:580.5px;font-size:15px;color:#000">INT</div>
<div class="t " style="left:716px;top:581.5px;font-size:15px;color:#000"><span class=c>不保持</span></div>
<div class="t " style="left:814px;top:580.5px;font-size:15px;color:#000">0</div>
<div class="t " style="left:421px;top:601.35px;font-size:15.5px;color:#000">213</div>
<div class="t " style="left:519.5px;top:601.35px;font-size:15.5px;color:#000">D212</div>
<div class="t " style="left:617px;top:601.35px;font-size:15px;color:#000">INT</div>
<div class="t " style="left:716px;top:602.35px;font-size:15px;color:#000"><span class=c>不保持</span></div>
<div class="t " style="left:814px;top:601.35px;font-size:15px;color:#000">0</div>
<div class="t " style="left:421px;top:622.2px;font-size:15.5px;color:#000">214</div>
<div class="t " style="left:519.5px;top:622.2px;font-size:15.5px;color:#000">D213</div>
<div class="t " style="left:617px;top:622.2px;font-size:15px;color:#000">INT</div>
<div class="t " style="left:716px;top:623.2px;font-size:15px;color:#000"><span class=c>不保持</span></div>
<div class="t " style="left:814px;top:622.2px;font-size:15px;color:#000">0</div>
<div class="t " style="left:421px;top:643.0500000000001px;font-size:15.5px;color:#000">215</div>
<div class="t " style="left:519.5px;top:643.0500000000001px;font-size:15.5px;color:#000">D214</div>
<div class="t " style="left:617px;top:643.0500000000001px;font-size:15px;color:#000">INT</div>
<div class="t " style="left:716px;top:644.0500000000001px;font-size:15px;color:#000"><span class=c>不保持</span></div>
<div class="t " style="left:814px;top:643.0500000000001px;font-size:15px;color:#000">0</div>
<div class="t " style="left:421px;top:663.9000000000001px;font-size:15.5px;color:#000">216</div>
<div class="t " style="left:519.5px;top:663.9000000000001px;font-size:15.5px;color:#000">D215</div>
<div class="t " style="left:617px;top:663.9000000000001px;font-size:15px;color:#000">INT</div>
<div class="t " style="left:716px;top:664.9000000000001px;font-size:15px;color:#000"><span class=c>不保持</span></div>
<div class="t " style="left:814px;top:663.9000000000001px;font-size:15px;color:#000">0</div>
<div class="t " style="left:421px;top:684.75px;font-size:15.5px;color:#000">217</div>
<div class="t " style="left:519.5px;top:684.75px;font-size:15.5px;color:#000">D216</div>
<div class="t " style="left:617px;top:684.75px;font-size:15px;color:#000">INT</div>
<div class="t " style="left:716px;top:685.75px;font-size:15px;color:#000"><span class=c>不保持</span></div>
<div class="t " style="left:814px;top:684.75px;font-size:15px;color:#000">0</div>
<div class="t " style="left:421px;top:705.6px;font-size:15.5px;color:#000">218</div>
<div class="t " style="left:519.5px;top:705.6px;font-size:15.5px;color:#000">D217</div>
<div class="t " style="left:617px;top:705.6px;font-size:15px;color:#000">INT</div>
<div class="t " style="left:716px;top:706.6px;font-size:15px;color:#000"><span class=c>不保持</span></div>
<div class="t " style="left:814px;top:705.6px;font-size:15px;color:#000">0</div>
<div class="t " style="left:421px;top:726.45px;font-size:15.5px;color:#000">219</div>
<div class="t " style="left:519.5px;top:726.45px;font-size:15.5px;color:#000">D218</div>
<div class="t " style="left:617px;top:726.45px;font-size:15px;color:#000">INT</div>
<div class="t " style="left:716px;top:727.45px;font-size:15px;color:#000"><span class=c>不保持</span></div>
<div class="t " style="left:814px;top:726.45px;font-size:15px;color:#000">0</div>
<div class="t " style="left:421px;top:747.3000000000001px;font-size:15.5px;color:#000">220</div>
<div class="t " style="left:519.5px;top:747.3000000000001px;font-size:15.5px;color:#000">D219</div>
<div class="t " style="left:617px;top:747.3000000000001px;font-size:15px;color:#000">INT</div>
<div class="t " style="left:716px;top:748.3000000000001px;font-size:15px;color:#000"><span class=c>不保持</span></div>
<div class="t " style="left:814px;top:747.3000000000001px;font-size:15px;color:#000">0</div>
<div class="t " style="left:421px;top:768.1500000000001px;font-size:15.5px;color:#000">221</div>
<div class="t " style="left:519.5px;top:768.1500000000001px;font-size:15.5px;color:#000">D220</div>
<div class="t " style="left:617px;top:768.1500000000001px;font-size:15px;color:#000">INT</div>
<div class="t " style="left:716px;top:769.1500000000001px;font-size:15px;color:#000"><span class=c>不保持</span></div>
<div class="t " style="left:814px;top:768.1500000000001px;font-size:15px;color:#000">0</div>
<div class="t " style="left:421px;top:789.0px;font-size:15.5px;color:#000">222</div>
<div class="t " style="left:519.5px;top:789.0px;font-size:15.5px;color:#000">D221</div>
<div class="t " style="left:617px;top:789.0px;font-size:15px;color:#000">INT</div>
<div class="t " style="left:716px;top:790.0px;font-size:15px;color:#000"><span class=c>不保持</span></div>
<div class="t " style="left:814px;top:789.0px;font-size:15px;color:#000">0</div>
<div class="t " style="left:421px;top:809.85px;font-size:15.5px;color:#000">223</div>
<div class="t " style="left:519.5px;top:809.85px;font-size:15.5px;color:#000">D222</div>
<div class="t " style="left:617px;top:809.85px;font-size:15px;color:#000">INT</div>
<div class="t " style="left:716px;top:810.85px;font-size:15px;color:#000"><span class=c>不保持</span></div>
<div class="t " style="left:814px;top:809.85px;font-size:15px;color:#000">0</div>
<div class="t " style="left:421px;top:830.7px;font-size:15.5px;color:#000">224</div>
<div class="t " style="left:519.5px;top:830.7px;font-size:15.5px;color:#000">D223</div>
<div class="t " style="left:617px;top:830.7px;font-size:15px;color:#000">INT</div>
<div class="t " style="left:716px;top:831.7px;font-size:15px;color:#000"><span class=c>不保持</span></div>
<div class="t " style="left:814px;top:830.7px;font-size:15px;color:#000">0</div>
<div class="t " style="left:421px;top:851.5500000000001px;font-size:15.5px;color:#000">225</div>
<div class="t " style="left:519.5px;top:851.5500000000001px;font-size:15.5px;color:#000">D224</div>
<div class="t " style="left:617px;top:851.5500000000001px;font-size:15px;color:#000">INT</div>
<div class="t " style="left:716px;top:852.5500000000001px;font-size:15px;color:#000"><span class=c>不保持</span></div>
<div class="t " style="left:814px;top:851.5500000000001px;font-size:15px;color:#000">0</div>
<div class="t " style="left:421px;top:872.4000000000001px;font-size:15.5px;color:#000">226</div>
<div class="t " style="left:519.5px;top:872.4000000000001px;font-size:15.5px;color:#000">D225</div>
<div class="t " style="left:617px;top:872.4000000000001px;font-size:15px;color:#000">INT</div>
<div class="t " style="left:716px;top:873.4000000000001px;font-size:15px;color:#000"><span class=c>不保持</span></div>
<div class="t " style="left:814px;top:872.4000000000001px;font-size:15px;color:#000">0</div>
<div style="left:417px;top:878px;width:880px;height:22px;background:#f0f0f0"></div>
<div style="left:439px;top:887px;width:694px;height:2px;background:#8a8a8a"></div>
<div style="left:1282px;top:291px;width:2px;height:22px;background:#8a8a8a"></div>
<div style="left:1302px;top:146px;width:1px;height:762px;background:#b8b8b8"></div>
<div class="t " style="left:1311px;top:161px;font-size:15px;color:#000"><span class=c>工具箱</span></div>
<svg style="left:1574px;top:155px;" width="11" height="12" viewBox="0 0 11 12"><path d="M2 1h7M3 1v6M7.5 1v6M1 7h9M5.5 7v4" stroke="#222" stroke-width="1.6" fill="none"/></svg>
<svg style="left:1594px;top:155px;" width="12" height="12" viewBox="0 0 12 12"><path d="M1.5 1.5l9 9M10.5 1.5l-9 9" stroke="#111" stroke-width="1.8"/></svg>
<div style="left:1306px;top:180px;width:305px;height:726px;background:#fff;border:2px solid #a0a0a0;border-right-color:#e0e0e0;border-bottom-color:#e0e0e0"></div>
<div style="left:1310px;top:183px;width:297px;height:20px;background:#f0f0f0;border-bottom:2px solid #a0a0a0;border-top:1px solid #a0a0a0"></div>
<div style="left:1374px;top:183px;width:1px;height:20px;background:#a0a0a0"></div>
<div style="left:1496px;top:183px;width:1px;height:20px;background:#a0a0a0"></div>
<div class="t " style="left:1313px;top:194px;font-size:15px;color:#000"><span class=c>序号</span></div>
<div class="t " style="left:1378px;top:194px;font-size:15px;color:#000"><span class=c>位地址</span></div>
<div class="t " style="left:1500px;top:194px;font-size:15px;color:#000"><span class=c>位注释</span></div>
<div style="left:1310px;top:203.0px;width:65px;height:19.6px;background:#f0f0f0;border-right:2px solid #a0a0a0;border-bottom:1px solid #a0a0a0;box-sizing:border-box"></div>
<div style="left:1375px;top:221.6px;width:232px;height:1px;background:#e8e8e8"></div>
<div class="t " style="left:1315.5px;top:213.5px;font-size:13.5px;color:#000;letter-spacing:0.4px;-webkit-text-stroke:0">1</div>
<div style="left:1375px;top:203px;width:122px;height:19px;background:#0078d7"></div>
<div class="t " style="left:1379px;top:213.5px;font-size:13.5px;color:#e8f0ff;letter-spacing:0.4px;-webkit-text-stroke:0">D0.0</div>
<div style="left:1310px;top:222.6px;width:65px;height:19.6px;background:#f0f0f0;border-right:2px solid #a0a0a0;border-bottom:1px solid #a0a0a0;box-sizing:border-box"></div>
<div style="left:1375px;top:241.2px;width:232px;height:1px;background:#e8e8e8"></div>
<div class="t " style="left:1315.5px;top:233.1px;font-size:13.5px;color:#000;letter-spacing:0.4px;-webkit-text-stroke:0">2</div>
<div class="t " style="left:1379px;top:233.1px;font-size:13.5px;color:#000;letter-spacing:0.4px;-webkit-text-stroke:0">D0.1</div>
<div style="left:1310px;top:242.2px;width:65px;height:19.6px;background:#f0f0f0;border-right:2px solid #a0a0a0;border-bottom:1px solid #a0a0a0;box-sizing:border-box"></div>
<div style="left:1375px;top:260.8px;width:232px;height:1px;background:#e8e8e8"></div>
<div class="t " style="left:1315.5px;top:252.7px;font-size:13.5px;color:#000;letter-spacing:0.4px;-webkit-text-stroke:0">3</div>
<div class="t " style="left:1379px;top:252.7px;font-size:13.5px;color:#000;letter-spacing:0.4px;-webkit-text-stroke:0">D0.2</div>
<div style="left:1310px;top:261.8px;width:65px;height:19.6px;background:#f0f0f0;border-right:2px solid #a0a0a0;border-bottom:1px solid #a0a0a0;box-sizing:border-box"></div>
<div style="left:1375px;top:280.4px;width:232px;height:1px;background:#e8e8e8"></div>
<div class="t " style="left:1315.5px;top:272.3px;font-size:13.5px;color:#000;letter-spacing:0.4px;-webkit-text-stroke:0">4</div>
<div class="t " style="left:1379px;top:272.3px;font-size:13.5px;color:#000;letter-spacing:0.4px;-webkit-text-stroke:0">D0.3</div>
<div style="left:1310px;top:281.4px;width:65px;height:19.6px;background:#f0f0f0;border-right:2px solid #a0a0a0;border-bottom:1px solid #a0a0a0;box-sizing:border-box"></div>
<div style="left:1375px;top:300.0px;width:232px;height:1px;background:#e8e8e8"></div>
<div class="t " style="left:1315.5px;top:291.9px;font-size:13.5px;color:#000;letter-spacing:0.4px;-webkit-text-stroke:0">5</div>
<div class="t " style="left:1379px;top:291.9px;font-size:13.5px;color:#000;letter-spacing:0.4px;-webkit-text-stroke:0">D0.4</div>
<div style="left:1310px;top:301.0px;width:65px;height:19.6px;background:#f0f0f0;border-right:2px solid #a0a0a0;border-bottom:1px solid #a0a0a0;box-sizing:border-box"></div>
<div style="left:1375px;top:319.6px;width:232px;height:1px;background:#e8e8e8"></div>
<div class="t " style="left:1315.5px;top:311.5px;font-size:13.5px;color:#000;letter-spacing:0.4px;-webkit-text-stroke:0">6</div>
<div class="t " style="left:1379px;top:311.5px;font-size:13.5px;color:#000;letter-spacing:0.4px;-webkit-text-stroke:0">D0.5</div>
<div style="left:1310px;top:320.6px;width:65px;height:19.6px;background:#f0f0f0;border-right:2px solid #a0a0a0;border-bottom:1px solid #a0a0a0;box-sizing:border-box"></div>
<div style="left:1375px;top:339.2px;width:232px;height:1px;background:#e8e8e8"></div>
<div class="t " style="left:1315.5px;top:331.1px;font-size:13.5px;color:#000;letter-spacing:0.4px;-webkit-text-stroke:0">7</div>
<div class="t " style="left:1379px;top:331.1px;font-size:13.5px;color:#000;letter-spacing:0.4px;-webkit-text-stroke:0">D0.6</div>
<div style="left:1310px;top:340.2px;width:65px;height:19.6px;background:#f0f0f0;border-right:2px solid #a0a0a0;border-bottom:1px solid #a0a0a0;box-sizing:border-box"></div>
<div style="left:1375px;top:358.8px;width:232px;height:1px;background:#e8e8e8"></div>
<div class="t " style="left:1315.5px;top:350.70000000000005px;font-size:13.5px;color:#000;letter-spacing:0.4px;-webkit-text-stroke:0">8</div>
<div class="t " style="left:1379px;top:350.70000000000005px;font-size:13.5px;color:#000;letter-spacing:0.4px;-webkit-text-stroke:0">D0.7</div>
<div style="left:1310px;top:359.8px;width:65px;height:19.6px;background:#f0f0f0;border-right:2px solid #a0a0a0;border-bottom:1px solid #a0a0a0;box-sizing:border-box"></div>
<div style="left:1375px;top:378.4px;width:232px;height:1px;background:#e8e8e8"></div>
<div class="t " style="left:1315.5px;top:370.3px;font-size:13.5px;color:#000;letter-spacing:0.4px;-webkit-text-stroke:0">9</div>
<div class="t " style="left:1379px;top:370.3px;font-size:13.5px;color:#000;letter-spacing:0.4px;-webkit-text-stroke:0">D0.8</div>
<div style="left:1310px;top:379.4px;width:65px;height:19.6px;background:#f0f0f0;border-right:2px solid #a0a0a0;border-bottom:1px solid #a0a0a0;box-sizing:border-box"></div>
<div style="left:1375px;top:398.0px;width:232px;height:1px;background:#e8e8e8"></div>
<div class="t " style="left:1315.5px;top:389.9px;font-size:13.5px;color:#000;letter-spacing:0.4px;-webkit-text-stroke:0">10</div>
<div class="t " style="left:1379px;top:389.9px;font-size:13.5px;color:#000;letter-spacing:0.4px;-webkit-text-stroke:0">D0.9</div>
<div style="left:1310px;top:399.0px;width:65px;height:19.6px;background:#f0f0f0;border-right:2px solid #a0a0a0;border-bottom:1px solid #a0a0a0;box-sizing:border-box"></div>
<div style="left:1375px;top:417.6px;width:232px;height:1px;background:#e8e8e8"></div>
<div class="t " style="left:1315.5px;top:409.5px;font-size:13.5px;color:#000;letter-spacing:0.4px;-webkit-text-stroke:0">11</div>
<div class="t " style="left:1379px;top:409.5px;font-size:13.5px;color:#000;letter-spacing:0.4px;-webkit-text-stroke:0">D0.10</div>
<div style="left:1310px;top:418.6px;width:65px;height:19.6px;background:#f0f0f0;border-right:2px solid #a0a0a0;border-bottom:1px solid #a0a0a0;box-sizing:border-box"></div>
<div style="left:1375px;top:437.2px;width:232px;height:1px;background:#e8e8e8"></div>
<div class="t " style="left:1315.5px;top:429.1px;font-size:13.5px;color:#000;letter-spacing:0.4px;-webkit-text-stroke:0">12</div>
<div class="t " style="left:1379px;top:429.1px;font-size:13.5px;color:#000;letter-spacing:0.4px;-webkit-text-stroke:0">D0.11</div>
<div style="left:1310px;top:438.2px;width:65px;height:19.6px;background:#f0f0f0;border-right:2px solid #a0a0a0;border-bottom:1px solid #a0a0a0;box-sizing:border-box"></div>
<div style="left:1375px;top:456.8px;width:232px;height:1px;background:#e8e8e8"></div>
<div class="t " style="left:1315.5px;top:448.70000000000005px;font-size:13.5px;color:#000;letter-spacing:0.4px;-webkit-text-stroke:0">13</div>
<div class="t " style="left:1379px;top:448.70000000000005px;font-size:13.5px;color:#000;letter-spacing:0.4px;-webkit-text-stroke:0">D0.12</div>
<div style="left:1310px;top:457.8px;width:65px;height:19.6px;background:#f0f0f0;border-right:2px solid #a0a0a0;border-bottom:1px solid #a0a0a0;box-sizing:border-box"></div>
<div style="left:1375px;top:476.4px;width:232px;height:1px;background:#e8e8e8"></div>
<div class="t " style="left:1315.5px;top:468.3px;font-size:13.5px;color:#000;letter-spacing:0.4px;-webkit-text-stroke:0">14</div>
<div class="t " style="left:1379px;top:468.3px;font-size:13.5px;color:#000;letter-spacing:0.4px;-webkit-text-stroke:0">D0.13</div>
<div style="left:1310px;top:477.4px;width:65px;height:19.6px;background:#f0f0f0;border-right:2px solid #a0a0a0;border-bottom:1px solid #a0a0a0;box-sizing:border-box"></div>
<div style="left:1375px;top:496.0px;width:232px;height:1px;background:#e8e8e8"></div>
<div class="t " style="left:1315.5px;top:487.90000000000003px;font-size:13.5px;color:#000;letter-spacing:0.4px;-webkit-text-stroke:0">15</div>
<div class="t " style="left:1379px;top:487.90000000000003px;font-size:13.5px;color:#000;letter-spacing:0.4px;-webkit-text-stroke:0">D0.14</div>
<div style="left:1310px;top:497.0px;width:65px;height:19.6px;background:#f0f0f0;border-right:2px solid #a0a0a0;border-bottom:1px solid #a0a0a0;box-sizing:border-box"></div>
<div style="left:1375px;top:515.6px;width:232px;height:1px;background:#e8e8e8"></div>
<div class="t " style="left:1315.5px;top:507.5px;font-size:13.5px;color:#000;letter-spacing:0.4px;-webkit-text-stroke:0">16</div>
<div class="t " style="left:1379px;top:507.5px;font-size:13.5px;color:#000;letter-spacing:0.4px;-webkit-text-stroke:0">D0.15</div>
<div style="left:1497px;top:203px;width:1px;height:314px;background:#e8e8e8"></div>
<div class="t " style="left:6px;top:928px;font-size:14.5px;color:#000"><span class=c>信息输出窗口</span></div>
<svg style="left:1574px;top:922px;" width="11" height="12" viewBox="0 0 11 12"><path d="M2 1h7M3 1v6M7.5 1v6M1 7h9M5.5 7v4" stroke="#222" stroke-width="1.6" fill="none"/></svg>
<svg style="left:1594px;top:922px;" width="12" height="12" viewBox="0 0 12 12"><path d="M1.5 1.5l9 9M10.5 1.5l-9 9" stroke="#111" stroke-width="1.8"/></svg>
<div style="left:3px;top:945.5px;width:1609px;height:1px;background:#fbfbfb"></div>
<div style="left:3px;top:947px;width:1610px;height:147px;background:#fff;border-top:2px solid #8a8a8a;border-left:1px solid #828282;border-right:2px solid #8a8a8a"></div>
<div class="t " style="left:4px;top:957.0px;font-size:14px;color:#000"><span class=c>信息</span></div>
<div class="t " style="left:49px;top:957.0px;font-family:'Liberation Mono',monospace;font-size:12.1px;color:#000;letter-spacing:0px">(2025-09-04 23:57:41)</div>
<div class="t " style="left:218px;top:957.0px;color:#000"><span class=c style='font-size:14.5px;letter-spacing:-0.4px'>下载</span><span style='font-size:12.07px;font-family:"Liberation Mono"'>dataLog.foid </span><span class=c style='font-size:14.5px;letter-spacing:-0.4px'>成功</span></div>
<div class="t " style="left:4px;top:975.45px;font-size:14px;color:#000"><span class=c>信息</span></div>
<div class="t " style="left:49px;top:975.45px;font-family:'Liberation Mono',monospace;font-size:12.1px;color:#000;letter-spacing:0px">(2025-09-04 23:57:42)</div>
<div class="t " style="left:218px;top:975.45px;color:#000"><span class=c style='font-size:14.5px;letter-spacing:-0.4px'>下载</span><span style='font-size:12.07px;font-family:"Liberation Mono"'>OpcUAServer.dat </span><span class=c style='font-size:14.5px;letter-spacing:-0.4px'>成功</span></div>
<div class="t " style="left:4px;top:993.9px;font-size:14px;color:#000"><span class=c>信息</span></div>
<div class="t " style="left:49px;top:993.9px;font-family:'Liberation Mono',monospace;font-size:12.1px;color:#000;letter-spacing:0px">(2025-09-04 23:57:42)</div>
<div class="t " style="left:218px;top:993.9px;color:#000"><span class=c style='font-size:14.5px;letter-spacing:-0.4px'>下载</span><span style='font-size:12.07px;font-family:"Liberation Mono"'>Ecam.foid </span><span class=c style='font-size:14.5px;letter-spacing:-0.4px'>成功</span></div>
<div class="t " style="left:4px;top:1012.35px;font-size:14px;color:#000"><span class=c>信息</span></div>
<div class="t " style="left:49px;top:1012.35px;font-family:'Liberation Mono',monospace;font-size:12.1px;color:#000;letter-spacing:0px">(2025-09-04 23:57:42)</div>
<div class="t " style="left:218px;top:1012.35px;color:#000"><span class=c style='font-size:14.5px;letter-spacing:-0.4px'>下载成功</span><span style='font-size:12.07px;font-family:"Liberation Mono"'>!</span></div>
<div class="t " style="left:4px;top:1030.8px;font-size:14px;color:#000"><span class=c>信息</span></div>
<div class="t " style="left:49px;top:1030.8px;font-family:'Liberation Mono',monospace;font-size:12.1px;color:#000;letter-spacing:0px">(2025-09-04 23:57:42)</div>
<div class="t " style="left:218px;top:1030.8px;color:#000"><span class=c style='font-size:14.5px;letter-spacing:-0.4px'>运行命令执行正确</span></div>
<div style="left:4px;top:1040px;width:1585px;height:18.5px;background:#000080"></div>
<div class="t " style="left:4px;top:1049.25px;font-size:14px;color:#fff"><span class=c>警告</span></div>
<div class="t " style="left:49px;top:1049.25px;font-family:'Liberation Mono',monospace;font-size:12.1px;color:#fff;letter-spacing:0px">(2025-09-04 23:57:42)</div>
<div class="t " style="left:218px;top:1049.25px;color:#fff"><span class=c style='font-size:14.5px;letter-spacing:-0.4px'>因</span><span style='font-size:12.07px;font-family:"Liberation Mono"'>Windows</span><span class=c style='font-size:14.5px;letter-spacing:-0.4px'>非实时系统原因，离线调试状态下定时器与实际</span><span style='font-size:12.07px;font-family:"Liberation Mono"'>PLC</span><span class=c style='font-size:14.5px;letter-spacing:-0.4px'>有一定差异；涉及定时中断子程序、内部时钟信号、运动控制等扫描周期相关功能；</span></div>
<div style="left:1598px;top:1028px;width:2px;height:22px;background:#8a8a8a"></div>
<div style="left:1589px;top:948px;width:21px;height:123px;background:#f0f0f0"></div>
<div style="left:1598px;top:1028px;width:2px;height:22px;background:#7a7a7a"></div>
<div style="left:4px;top:1071px;width:1607px;height:23px;background:#f0f0f0"></div>
<div style="left:6px;top:1071px;width:1602px;height:1.5px;background:#1a1a1a"></div>
<svg style="left:4.7px;top:1074.5px;" width="16" height="16" viewBox="0 0 16 16"><rect x="0" y="0" width="16" height="16" fill="#f4f4f4"/><path d="M15 0v15H0" stroke="#8a8a8a" stroke-width="1.6" fill="none"/><rect x="3.6" y="3.3" width="1.2" height="8.6" fill="#000"/><path d="M11.5 3.3v8.6L6.2 7.6z" fill="#000"/></svg>
<svg style="left:24.5px;top:1074.5px;" width="16" height="16" viewBox="0 0 16 16"><rect x="0" y="0" width="16" height="16" fill="#f4f4f4"/><path d="M15 0v15H0" stroke="#8a8a8a" stroke-width="1.6" fill="none"/><path d="M10.2 3.3v8.6L4.8 7.6z" fill="#000"/></svg>
<svg style="left:44.6px;top:1074.5px;" width="16" height="16" viewBox="0 0 16 16"><rect x="0" y="0" width="16" height="16" fill="#f4f4f4"/><path d="M15 0v15H0" stroke="#8a8a8a" stroke-width="1.6" fill="none"/><path d="M5.5 3.3v8.6l5.4-4.3z" fill="#000"/></svg>
<svg style="left:63.7px;top:1074.5px;" width="16" height="16" viewBox="0 0 16 16"><rect x="0" y="0" width="16" height="16" fill="#f4f4f4"/><path d="M15 0v15H0" stroke="#8a8a8a" stroke-width="1.6" fill="none"/><path d="M4.8 3.3v8.6l5.4-4.3z" fill="#000"/><rect x="11" y="3.3" width="1.2" height="8.6" fill="#000"/></svg>
<svg style="left:80px;top:1071.5px;" width="320" height="21" viewBox="0 0 320 21"><path d="M258 0.5L267 19.5H302L311 0.5" fill="#f0f0f0" stroke="#2a2a2a" stroke-width="1.1"/><path d="M183 0.5L193 19.5H258L266 0.5" fill="#f0f0f0" stroke="#2a2a2a" stroke-width="1.1"/><path d="M120 0.5L130 19.5H182L191 0.5" fill="#f0f0f0" stroke="#2a2a2a" stroke-width="1.1"/><path d="M5 0.5L15 19.5H66L76 0.5" fill="#f0f0f0" stroke="#2a2a2a" stroke-width="1.1"/><path d="M67 0.5L76 19.5H119L129 0.5" fill="#ffffff" stroke="#2a2a2a" stroke-width="1.1"/></svg>
<div class="t " style="left:105px;top:1080px;font-size:13px;color:#000;letter-spacing:0.3px;-webkit-text-stroke:0.3px #000"><span class=c>编译</span></div>
<div class="t " style="left:168px;top:1080px;font-size:13px;color:#000;letter-spacing:0.3px;font-weight:bold"><span class=c>通讯</span></div>
<div class="t " style="left:222px;top:1080px;font-size:13px;color:#000;letter-spacing:0.3px;-webkit-text-stroke:0.3px #000"><span class=c>转换</span></div>
<div class="t " style="left:277px;top:1080px;font-size:13px;color:#000;letter-spacing:0.3px;-webkit-text-stroke:0.3px #000"><span class=c>查找结果</span></div>
<div class="t " style="left:351px;top:1080px;font-size:13px;color:#000;letter-spacing:0.3px;-webkit-text-stroke:0.3px #000"><span class=c>监控</span></div>
<div style="left:820px;top:1074px;width:8px;height:18px;border:1px solid #808080;background:#f4f4f4"></div>
<div style="left:848px;top:1082px;width:148px;height:1px;background:#909090"></div>
<div style="left:1px;top:1092px;width:1613px;height:33px;background:#f0f0f0"></div>
<div style="left:1px;top:1093.5px;width:1611px;height:2px;background:#6e6e6e"></div>
<div style="left:1px;top:1096px;width:1611px;height:1px;background:#fcfcfc"></div>
<div style="left:1px;top:1123.5px;width:1613px;height:1.5px;background:#a8a8a8"></div>
<div class="t " style="left:6px;top:1111px;font-size:14.5px;color:#000"><span class=c>就绪</span></div>
<div class="t " style="left:812px;top:1111px;font-size:14.5px;color:#000">PLC<span class=c>当前状态</span></div>
<svg style="left:909px;top:1103px;" width="15" height="15" viewBox="0 0 15 15"><defs><radialGradient id="led" cx="0.4" cy="0.35" r="0.7"><stop offset="0" stop-color="#d8f5c8"/><stop offset="1" stop-color="#4aaa3a"/></radialGradient></defs><circle cx="7.5" cy="7.5" r="6.8" fill="url(#led)" stroke="#2a5a2a" stroke-width="1"/></svg>
<div class="t " style="left:949px;top:1111px;font-size:14.5px;color:#000"><span class=c>故障状态</span></div>
<svg style="left:1021px;top:1103px;" width="15" height="15" viewBox="0 0 15 15"><circle cx="7.5" cy="7.5" r="6.8" fill="url(#led)" stroke="#2a5a2a" stroke-width="1"/></svg>
<div style="left:1052px;top:1098.5px;width:530px;height:24px;background:#0000ff"></div>
<div class="t " style="left:1056px;top:1111px;font-size:15px;color:#fff">[Easy523] <span class=c>版本</span>:6.4.0.1B05 <span class=c>扫描周期</span>:16.1 ms <span class=c>防火墙状态</span>:<span class=c>已关闭</span></div>
<div style="left:1587px;top:1098.5px;width:26px;height:24px;background:#0000ff;border-bottom-right-radius:6px"></div>
<div class="t " style="left:1588px;top:1111px;font-size:15px;color:#fff">CPU</div>
<div style="left:23px;top:225.5px;width:144.5px;height:31.0px;border:3px solid #ff0000"></div>
<svg style="left:0;top:0" width="1614" height="1125" viewBox="0 0 1614 1125"><path d="M167 240H187V264" stroke="#ff0000" stroke-width="3.2" fill="none"/><path d="M181.5 263h11l-5.5 11z" fill="#ff0000"/><path d="M309 289.7H522.7V132.2H758.8V158" stroke="#ff0000" stroke-width="4" fill="none"/><path d="M752.5 157h12.3l-6.1 12z" fill="#ff0000"/><path d="M781 198.2H804.7V231.7H818" stroke="#ff0000" stroke-width="4" fill="none"/><path d="M816.4 226.4v11.8l11.8-5.9z" fill="#ff0000"/></svg>
<div style="left:65px;top:274px;width:245px;height:32px;border:3px solid #ff0000"></div>
<div style="left:736px;top:169px;width:46px;height:59px;border:3px solid #ff0000"></div>
<div style="left:828px;top:209px;width:154px;height:48px;border:3px solid #ff0000"></div>
<svg style="left:171.2px;top:199.2px;" width="32.6" height="32.6" viewBox="0 0 32.6 32.6"><circle cx="16.3" cy="16.3" r="14.8" fill="#fff" stroke="#ff0000" stroke-width="2"/><text x="16.3" y="23.3" font-size="20" font-family="Liberation Sans" text-anchor="middle" fill="#000">1</text></svg>
<svg style="left:312.2px;top:252.39999999999998px;" width="32.6" height="32.6" viewBox="0 0 32.6 32.6"><circle cx="16.3" cy="16.3" r="14.8" fill="#fff" stroke="#ff0000" stroke-width="2"/><text x="16.3" y="23.3" font-size="20" font-family="Liberation Sans" text-anchor="middle" fill="#000">2</text></svg>
<svg style="left:706.2px;top:138.7px;" width="32.6" height="32.6" viewBox="0 0 32.6 32.6"><circle cx="16.3" cy="16.3" r="14.8" fill="#fff" stroke="#ff0000" stroke-width="2"/><text x="16.3" y="23.3" font-size="20" font-family="Liberation Sans" text-anchor="middle" fill="#000">3</text></svg>
<svg style="left:927.2px;top:172.7px;" width="32.6" height="32.6" viewBox="0 0 32.6 32.6"><circle cx="16.3" cy="16.3" r="14.8" fill="#fff" stroke="#ff0000" stroke-width="2"/><text x="16.3" y="23.3" font-size="20" font-family="Liberation Sans" text-anchor="middle" fill="#000">4</text></svg></body></html>
